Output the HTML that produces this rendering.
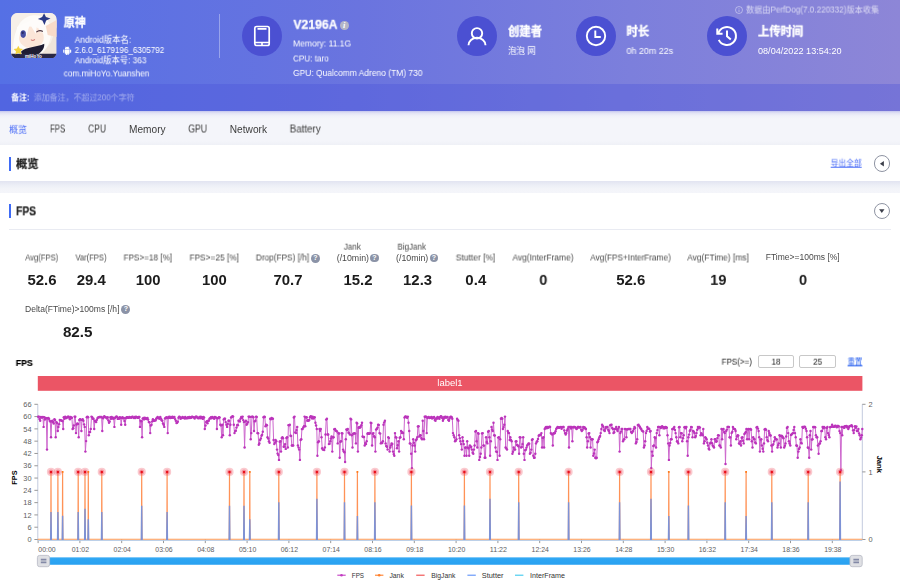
<!DOCTYPE html>
<html lang="zh-CN"><head><meta charset="utf-8"><title>PerfDog</title>
<style>
html,body{margin:0;padding:0;}
body{width:900px;height:581px;overflow:hidden;background:#fff;font-family:"Liberation Sans","Noto Sans CJK SC",sans-serif;position:relative;}
.t{position:absolute;left:0;top:0;white-space:nowrap;display:inline-block;transform-origin:0 50%;will-change:transform;}
.abs{position:absolute;}
.hdr{position:absolute;left:0;top:0;width:900px;height:110.8px;background:linear-gradient(90deg,#5570e5 0%,#6a74df 40%,#7c7fdc 70%,#8d86d7 100%);}
.rem{position:absolute;left:0;top:84px;width:900px;height:27px;background:rgba(72,82,216,.34);}
.circ{position:absolute;width:40px;height:40px;border-radius:50%;background:#4b50d2;top:16px;}
.nav{position:absolute;left:0;top:110.7px;width:900px;height:34.5px;background:linear-gradient(180deg,#c4c6ee 0,#e2e3f4 2px,#f0f1f9 5px,#f4f5fa 8px,#f4f5fa 30px,#eef0f6 34.5px);}
.card1{position:absolute;left:0;top:145.2px;width:900px;height:35.7px;background:#fff;}
.gap{position:absolute;left:0;top:180.9px;width:900px;height:12px;background:linear-gradient(180deg,#e2e4f1 0,#eceef6 4px,#f3f4f9 8px,#f4f5fa 100%);}
.bar{position:absolute;left:9.3px;width:2px;height:14px;background:#3f6bf5;}
.q{position:absolute;width:8.8px;height:8.8px;border-radius:50%;background:#8b93a7;color:#fff;font-size:7px;line-height:8.8px;text-align:center;font-weight:bold;}
.btn{position:absolute;width:16.6px;height:16.6px;border-radius:50%;border:.8px solid #8f94a3;background:#fff;box-sizing:border-box;left:873.9px;}
.inp{position:absolute;top:355px;height:12.6px;width:36.4px;border:1px solid #c8c8c8;border-radius:2px;box-sizing:border-box;background:#fff;}
</style></head><body>
<div class="hdr"></div><div class="rem"></div>
<div class="nav"></div><div class="card1"></div><div class="gap"></div>
<!-- app icon -->
<svg class="abs" style="left:11.4px;top:12.5px" width="45.7" height="45.8" viewBox="0 0 46 46">
<defs><clipPath id="ic"><rect x="0" y="0" width="46" height="46" rx="6.5"/></clipPath></defs>
<g clip-path="url(#ic)">
<rect width="46" height="46" fill="#efe4da"/>
<path d="M0 0H46V14L40 30L30 42H0Z" fill="#f6efe8"/>
<path d="M2 46C1 24 6 5 21 2.500C33 1 41 8 40.500 19C40 29 36 37 29 42Z" fill="#fdfbf8"/>
<ellipse cx="20.500" cy="24.500" rx="12.500" ry="11" fill="#fbe6d8"/>
<path d="M6 14L27 4L25 21L19 11L15 25L10 16L7 30Z" fill="#fefcfa"/>
<path d="M24 6C32 8 37 14 36 24L33 16L30 20Z" fill="#fefcfa"/>
<ellipse cx="12.300" cy="21.200" rx="2.700" ry="3.800" fill="#474fa3"/>
<ellipse cx="11.800" cy="19.800" rx="1.100" ry="1.300" fill="#2a2c66"/>
<path d="M25.500 19.200q3.200-2.600 6.600-.6" stroke="#4a3540" stroke-width="1.100" fill="none"/>
<path d="M20 27q2 1.300 4.200-.3" stroke="#c9615f" stroke-width=".9" fill="none"/>
<path d="M35 13L46 7V24L37 22Z" fill="#f8dbc9"/>
<path d="M33.300 0.200l1.900 3.800 4.600 1.600-4.400 1.800-1.700 4.600-2.100-4.400-4.500-1.700 4.300-1.900z" fill="#2b3a86"/>
<path d="M10 39C15 34 26 34.500 33.500 31C34 36 30 41 24 43H12Z" fill="#1e1c32"/>
<path d="M0 41H46V46H0Z" fill="#2a2846"/>
<path d="M7.300 32.800l1.500 2.900 3.300.5-2.400 2.300.6 3.300-3-1.600-2.900 1.600.6-3.300L2.600 36.200l3.300-.5z" fill="#f3d23f"/>
</g>
<text x="22.600" y="45" font-size="4.600" font-weight="bold" fill="#fff" text-anchor="middle" font-family='"Liberation Sans","Noto Sans CJK SC",sans-serif'>miHoYo</text>
</svg>
<!-- android icon -->
<svg class="abs" style="left:63.3px;top:45.6px" width="8.4" height="9.4" viewBox="0 0 24 27"><g fill="#fff"><path d="M5 10h14v11a1.500 1.500 0 0 1-1.500 1.500H16V26a1.600 1.600 0 0 1-3.200 0v-3.500h-1.600V26a1.600 1.600 0 0 1-3.200 0v-3.500H6.500A1.500 1.500 0 0 1 5 21z"/><rect x="0.500" y="10" width="3.300" height="9.500" rx="1.650"/><rect x="20.200" y="10" width="3.300" height="9.500" rx="1.650"/><path d="M5 9a7 6.500 0 0 1 14 0zM8.300 5.500a.8.800 0 1 0 1.600 0 .8.800 0 1 0-1.600 0zM14.100 5.500a.8.800 0 1 0 1.600 0 .8.800 0 1 0-1.600 0z" fill-rule="evenodd"/><path d="M7.500 1l1.500 2.500M16.500 1L15 3.500" stroke="#fff" stroke-width="1"/></g></svg>
<div class="abs" style="left:219px;top:14px;width:1px;height:44px;background:rgba(255,255,255,.35)"></div>
<div class="circ" style="left:242px"></div><div class="circ" style="left:457px"></div><div class="circ" style="left:575.5px"></div><div class="circ" style="left:707px"></div>
<!-- header icons -->
<svg class="abs" style="left:242px;top:16px" width="40" height="40" viewBox="0 0 40 40" fill="none" stroke="#fff" stroke-width="1.700"><rect x="12.800" y="10.500" width="14.400" height="19" rx="1.800"/><path d="M12.800 26.500h14.400M15.500 12.800h9" /><path d="M20 26.500v3"/></svg>
<svg class="abs" style="left:457px;top:16px" width="40" height="40" viewBox="0 0 40 40" fill="none" stroke="#fff" stroke-width="1.900"><circle cx="20" cy="17.300" r="5.200"/><path d="M11.500 29.300a8.500 7.500 0 0 1 17 0"/></svg>
<svg class="abs" style="left:575.5px;top:16px" width="40" height="40" viewBox="0 0 40 40" fill="none" stroke="#fff" stroke-width="1.900"><circle cx="20" cy="20" r="9.200"/><path d="M19.300 14.500v6.500h5.500"/></svg>
<svg class="abs" style="left:707px;top:16px" width="40" height="40" viewBox="0 0 40 40" fill="none" stroke="#fff" stroke-width="2"><path d="M11.300 17.500A9 9 0 1 1 11.800 23.800"/><path d="M10.300 12.500v5.300h5.300" /><path d="M20 14.500v5.800l3.800 3.300"/></svg>
<!-- info icons -->
<span class="abs" style="left:339.900px;top:21.300px;width:8.800px;height:8.800px;border-radius:50%;background:#b4b5c6;color:#fff;font-size:8.500px;line-height:8.800px;text-align:center;font-style:italic;font-weight:bold;font-family:'Liberation Serif',serif">i</span>
<svg class="abs" style="left:734.500px;top:6px" width="8" height="8" viewBox="0 0 8 8" fill="none" stroke="rgba(255,255,255,.7)" stroke-width=".6"><circle cx="4" cy="4" r="3.500"/><path d="M4 3.500v2.500M4 2v.7"/></svg>
<!-- section bars & buttons -->
<div class="bar" style="top:156.500px"></div><div class="bar" style="top:204.300px"></div>
<div class="btn" style="top:155.300px"></div><div class="btn" style="top:202.600px"></div>
<svg class="abs" style="left:874.200px;top:155.800px" width="15.600" height="15.600" viewBox="0 0 15.600 15.600"><path d="M9.900 5.100v5.400L5.900 7.800z" fill="#3c3f4a"/></svg>
<svg class="abs" style="left:874.200px;top:203px" width="15.600" height="15.600" viewBox="0 0 15.600 15.600"><path d="M5.100 6.200h5.400L7.800 10z" fill="#3c3f4a"/></svg>
<div class="abs" style="left:9px;top:229px;width:881.500px;height:1px;background:#e9ebf2"></div>
<div class="inp" style="left:757.600px"></div><div class="inp" style="left:799.400px"></div>
<svg class="abs" style="left:0;top:0" width="900" height="581" viewBox="0 0 900 581" font-family='"Liberation Sans","Noto Sans CJK SC",sans-serif'><rect x="37.8" y="376" width="824.6" height="14.8" fill="#eb5565"/><path d="M37.8 404.3V539.5M862.3 404.3V539.5" stroke="#c2cade" stroke-width="1" fill="none"/><path d="M34.4 539.50H37.8M34.4 527.21H37.8M34.4 514.92H37.8M34.4 502.63H37.8M34.4 490.34H37.8M34.4 478.05H37.8M34.4 465.75H37.8M34.4 453.46H37.8M34.4 441.17H37.8M34.4 428.88H37.8M34.4 416.59H37.8M34.4 404.30H37.8M862.3 539.50h3.2M862.3 471.90h3.2M862.3 404.30h3.2M38.10 539.5v3.6M79.90 539.5v3.6M121.70 539.5v3.6M163.50 539.5v3.6M205.30 539.5v3.6M247.10 539.5v3.6M288.90 539.5v3.6M330.70 539.5v3.6M372.50 539.5v3.6M414.30 539.5v3.6M456.10 539.5v3.6M497.90 539.5v3.6M539.70 539.5v3.6M581.50 539.5v3.6M623.30 539.5v3.6M665.10 539.5v3.6M706.90 539.5v3.6M748.70 539.5v3.6M790.50 539.5v3.6M832.30 539.5v3.6" stroke="#8c8c8c" stroke-width="0.9" fill="none"/><g font-size="7.4" fill="#606060"><text x="31.6" y="542.20" text-anchor="end">0</text><text x="31.6" y="529.91" text-anchor="end">6</text><text x="31.6" y="517.62" text-anchor="end">12</text><text x="31.6" y="505.33" text-anchor="end">18</text><text x="31.6" y="493.04" text-anchor="end">24</text><text x="31.6" y="480.75" text-anchor="end">30</text><text x="31.6" y="468.45" text-anchor="end">36</text><text x="31.6" y="456.16" text-anchor="end">42</text><text x="31.6" y="443.87" text-anchor="end">48</text><text x="31.6" y="431.58" text-anchor="end">54</text><text x="31.6" y="419.29" text-anchor="end">60</text><text x="31.6" y="407.00" text-anchor="end">66</text><text x="868.6" y="542.20">0</text><text x="868.6" y="474.60">1</text><text x="868.6" y="407.00">2</text><text x="38.3" y="551.7" textLength="17.3" lengthAdjust="spacingAndGlyphs">00:00</text><text x="71.75" y="551.7" textLength="17.3" lengthAdjust="spacingAndGlyphs">01:02</text><text x="113.55" y="551.7" textLength="17.3" lengthAdjust="spacingAndGlyphs">02:04</text><text x="155.35" y="551.7" textLength="17.3" lengthAdjust="spacingAndGlyphs">03:06</text><text x="197.15" y="551.7" textLength="17.3" lengthAdjust="spacingAndGlyphs">04:08</text><text x="238.95" y="551.7" textLength="17.3" lengthAdjust="spacingAndGlyphs">05:10</text><text x="280.75" y="551.7" textLength="17.3" lengthAdjust="spacingAndGlyphs">06:12</text><text x="322.55" y="551.7" textLength="17.3" lengthAdjust="spacingAndGlyphs">07:14</text><text x="364.35" y="551.7" textLength="17.3" lengthAdjust="spacingAndGlyphs">08:16</text><text x="406.15" y="551.7" textLength="17.3" lengthAdjust="spacingAndGlyphs">09:18</text><text x="447.95" y="551.7" textLength="17.3" lengthAdjust="spacingAndGlyphs">10:20</text><text x="489.75" y="551.7" textLength="17.3" lengthAdjust="spacingAndGlyphs">11:22</text><text x="531.55" y="551.7" textLength="17.3" lengthAdjust="spacingAndGlyphs">12:24</text><text x="573.35" y="551.7" textLength="17.3" lengthAdjust="spacingAndGlyphs">13:26</text><text x="615.15" y="551.7" textLength="17.3" lengthAdjust="spacingAndGlyphs">14:28</text><text x="656.95" y="551.7" textLength="17.3" lengthAdjust="spacingAndGlyphs">15:30</text><text x="698.75" y="551.7" textLength="17.3" lengthAdjust="spacingAndGlyphs">16:32</text><text x="740.55" y="551.7" textLength="17.3" lengthAdjust="spacingAndGlyphs">17:34</text><text x="782.35" y="551.7" textLength="17.3" lengthAdjust="spacingAndGlyphs">18:36</text><text x="824.15" y="551.7" textLength="17.3" lengthAdjust="spacingAndGlyphs">19:38</text></g><text transform="translate(17.3 477.6) rotate(-90)" font-size="7.3" font-weight="bold" fill="#000" text-anchor="middle">FPS</text><text transform="translate(877.3 464.3) rotate(90)" font-size="7.6" font-weight="bold" fill="#000" text-anchor="middle">Jank</text><path d="M38.2 416.8L38.9 416.6L39.5 418.9L40.2 420.7L40.9 416.9L41.6 417.5L42.2 417.5L42.9 416.9L43.6 426.9L44.3 417.3L44.9 419.5L45.6 418.0L46.3 418.2L47.0 449.6L47.6 418.2L48.3 418.0L49.0 418.8L49.7 420.7L50.3 421.6L51.0 437.2L51.7 421.2L52.4 420.7L53.0 422.0L53.7 423.5L54.4 419.3L55.1 420.0L55.7 437.2L56.4 422.1L57.1 423.0L57.8 431.0L58.4 426.9L59.1 424.2L59.8 420.0L60.5 420.1L61.1 420.4L61.8 420.7L62.5 421.0L63.2 429.0L63.8 417.3L64.5 418.8L65.2 416.6L65.9 418.1L66.5 418.0L67.2 417.2L67.9 416.8L68.6 416.6L69.2 417.8L69.9 419.3L70.6 416.9L71.3 417.8L71.9 417.8L72.6 429.0L73.3 428.2L73.9 425.5L74.6 416.6L75.3 416.8L76.0 433.1L76.6 424.5L77.3 423.5L78.0 423.9L78.7 437.2L79.3 420.0L80.0 419.3L80.7 419.6L81.4 431.0L82.0 419.9L82.7 419.3L83.4 420.7L84.1 424.4L84.7 426.9L85.4 451.6L86.1 441.1L86.8 417.2L87.4 416.6L88.1 417.2L88.8 435.2L89.5 431.9L90.1 432.1L90.8 429.0L91.5 416.6L92.2 417.3L92.8 418.7L93.5 418.8L94.2 429.0L94.9 420.7L95.5 421.7L96.2 422.1L96.9 419.8L97.6 418.0L98.2 417.4L98.9 417.3L99.6 417.0L100.3 416.9L100.9 417.2L101.6 416.9L102.3 431.0L103.0 418.2L103.6 417.3L104.3 416.2L105.0 416.9L105.7 417.1L106.3 417.7L107.0 418.5L107.7 417.3L108.3 420.4L109.0 422.8L109.7 421.6L110.4 417.3L111.0 418.7L111.7 416.9L112.4 418.5L113.1 417.7L113.7 418.7L114.4 426.9L115.1 417.8L115.8 417.3L116.4 416.4L117.1 416.9L117.8 418.9L118.5 418.0L119.1 418.8L119.8 417.3L120.5 417.7L121.2 424.8L121.8 417.9L122.5 417.3L123.2 418.4L123.9 418.0L124.5 421.0L125.2 424.8L125.9 418.3L126.6 417.3L127.2 417.1L127.9 417.7L128.6 417.9L129.3 416.9L129.9 417.5L130.6 417.4L131.3 417.7L132.0 416.9L132.6 416.8L133.3 417.6L134.0 418.1L134.7 416.9L135.3 418.0L136.0 416.7L136.7 417.4L137.4 417.1L138.0 417.9L138.7 416.9L139.4 416.9L140.0 426.9L140.7 420.7L141.4 421.3L142.1 437.2L142.7 418.6L143.4 418.0L144.1 419.4L144.8 417.7L145.4 418.7L146.1 418.2L146.8 419.1L147.5 418.0L148.1 419.6L148.8 422.1L149.5 422.2L150.2 433.1L150.8 425.5L151.5 424.8L152.2 421.4L152.9 419.3L153.5 420.7L154.2 420.7L154.9 420.4L155.6 420.4L156.2 418.7L156.9 417.9L157.6 416.9L158.3 418.3L158.9 417.7L159.6 418.8L160.3 416.9L161.0 418.6L161.6 420.2L162.3 420.7L163.0 423.5L163.7 424.8L164.3 426.9L165.0 418.4L165.7 418.0L166.4 417.3L167.0 418.0L167.7 433.1L168.4 416.9L169.1 417.9L169.7 416.6L170.4 418.1L171.1 417.1L171.8 417.9L172.4 416.6L173.1 417.8L173.8 417.3L174.4 416.9L175.1 419.1L175.8 420.7L176.5 423.1L177.1 422.8L177.8 421.7L178.5 417.7L179.2 416.8L179.8 416.9L180.5 418.7L181.2 418.0L181.9 418.0L182.5 416.9L183.2 417.7L183.9 417.7L184.6 418.5L185.2 416.9L185.9 418.2L186.6 418.0L187.3 418.2L187.9 417.1L188.6 418.1L189.3 416.9L190.0 418.0L190.6 417.3L191.3 417.7L192.0 416.7L192.7 416.9L193.3 417.2L194.0 417.4L194.7 418.5L195.4 416.9L196.0 416.7L196.7 416.6L197.4 417.7L198.1 418.2L198.7 418.1L199.4 416.9L200.1 418.2L200.8 416.6L201.4 418.1L202.1 417.1L202.8 418.9L203.5 416.9L204.1 417.6L204.8 429.0L205.5 425.6L206.2 422.1L206.8 421.2L207.5 423.2L208.2 420.7L208.8 420.7L209.5 418.7L210.2 418.2L210.9 417.3L211.5 418.2L212.2 416.9L212.9 417.5L213.6 418.0L214.2 418.8L214.9 416.9L215.6 417.4L216.3 417.7L216.9 429.0L217.6 418.3L218.3 418.0L219.0 417.3L219.6 417.5L220.3 424.8L221.0 425.4L221.7 437.2L222.3 424.8L223.0 435.2L223.7 419.5L224.4 418.8L225.0 418.7L225.7 422.1L226.4 424.8L227.1 426.9L227.7 424.0L228.4 420.7L229.1 420.7L229.8 435.2L230.4 424.8L231.1 417.5L231.8 416.9L232.5 416.2L233.1 416.6L233.8 424.8L234.5 433.1L235.2 431.1L235.8 430.7L236.5 427.6L237.2 425.0L237.9 425.2L238.5 420.7L239.2 420.6L239.9 421.6L240.5 418.7L241.2 417.0L241.9 417.9L242.6 416.6L243.2 420.1L243.9 422.1L244.6 447.5L245.3 421.4L245.9 420.7L246.6 424.8L247.3 423.7L248.0 422.1L248.6 416.6L249.3 416.8L250.0 416.9L250.7 439.3L251.3 433.1L252.0 416.7L252.7 416.6L253.4 417.2L254.0 431.0L254.7 421.4L255.4 420.7L256.1 416.6L256.7 417.0L257.4 433.1L258.1 433.2L258.8 444.8L259.4 443.4L260.1 440.0L260.8 438.5L261.5 435.8L262.1 434.8L262.8 431.7L263.5 417.2L264.2 416.6L264.8 417.0L265.5 426.2L266.2 424.8L266.9 425.2L267.5 437.2L268.2 438.6L268.9 441.4L269.6 442.7L270.2 418.7L270.9 419.2L271.6 418.0L272.3 418.6L272.9 418.7L273.6 440.0L274.3 444.1L274.9 442.7L275.6 440.0L276.3 441.3L277.0 449.6L277.6 453.6L278.3 455.1L279.0 459.9L279.7 441.8L280.3 441.3L281.0 451.6L281.7 438.1L282.4 437.2L283.0 438.2L283.7 446.8L284.4 446.6L285.1 444.1L285.7 448.9L286.4 438.0L287.1 437.2L287.8 447.5L288.4 425.1L289.1 425.3L289.8 424.8L290.5 435.8L291.1 436.0L291.8 445.5L292.5 445.5L293.2 445.5L293.8 417.5L294.5 416.6L295.2 432.4L295.9 433.1L296.5 430.1L297.2 426.9L297.9 445.5L298.6 447.6L299.2 449.6L299.9 459.9L300.6 440.0L301.3 439.3L301.9 429.1L302.6 429.0L303.3 427.4L304.0 426.2L304.6 416.6L305.3 426.2L306.0 417.4L306.7 417.3L307.3 420.7L308.0 420.2L308.7 420.7L309.3 419.9L310.0 417.3L310.7 416.3L311.4 416.6L312.0 418.4L312.7 416.6L313.4 418.6L314.1 417.4L314.7 417.3L315.4 422.8L316.1 425.5L316.8 429.0L317.4 455.8L318.1 442.2L318.8 441.3L319.5 429.0L320.1 430.7L320.8 429.0L321.5 437.2L322.2 448.2L322.8 449.6L323.5 449.6L324.2 450.1L324.9 447.5L325.5 434.5L326.2 419.6L326.9 418.7L327.6 434.5L328.2 434.5L328.9 444.1L329.6 443.7L330.3 441.3L330.9 438.5L331.6 436.5L332.3 451.6L333.0 437.4L333.6 437.2L334.3 429.2L335.0 429.0L335.7 430.5L336.3 431.0L337.0 431.4L337.7 443.4L338.4 433.1L339.0 433.5L339.7 457.8L340.4 441.7L341.1 441.3L341.7 433.1L342.4 433.4L343.1 449.6L343.7 451.2L344.4 452.3L345.1 462.0L345.8 439.3L346.4 429.5L347.1 430.0L347.8 429.0L348.5 432.7L349.1 433.1L349.8 434.5L350.5 418.7L351.2 419.4L351.8 435.2L352.5 447.5L353.2 433.8L353.9 433.6L354.5 433.1L355.2 433.6L355.9 443.4L356.6 422.8L357.2 423.4L357.9 451.6L358.6 427.8L359.3 426.9L359.9 427.7L360.6 426.9L361.3 425.3L362.0 422.8L362.6 436.5L363.3 437.1L364.0 437.0L364.7 445.5L365.3 443.1L366.0 444.1L366.7 441.3L367.4 433.7L368.0 433.1L368.7 433.7L369.4 433.7L370.1 433.1L370.7 422.8L371.4 423.1L372.1 445.5L372.8 433.8L373.4 433.1L374.1 436.2L374.8 437.2L375.4 451.6L376.1 429.6L376.8 429.0L377.5 427.6L378.1 424.8L378.8 424.9L379.5 433.1L380.2 433.6L380.8 443.4L381.5 442.8L382.2 443.0L382.9 441.3L383.5 424.8L384.2 422.4L384.9 420.7L385.6 443.4L386.2 446.0L386.9 446.8L387.6 449.6L388.3 437.2L388.9 438.1L389.6 451.6L390.3 447.5L391.0 445.4L391.6 443.4L392.3 443.9L393.0 451.6L393.7 454.1L394.3 455.8L395.0 433.1L395.7 437.2L396.4 437.6L397.0 448.2L397.7 445.3L398.4 441.3L399.1 451.6L399.7 437.7L400.4 437.2L401.1 431.0L401.8 432.9L402.4 432.3L403.1 433.1L403.8 439.3L404.5 417.6L405.1 416.6L405.8 416.5L406.5 417.3L407.2 417.8L407.8 416.6L408.5 422.8L409.2 431.0L409.8 443.4L410.5 443.6L411.2 453.7L411.9 468.1L412.5 445.5L413.2 439.3L413.9 442.8L414.6 445.5L415.2 451.6L415.9 440.2L416.6 439.3L417.3 437.2L417.9 426.5L418.6 426.2L419.3 436.5L420.0 435.4L420.6 435.2L421.3 438.1L422.0 439.3L422.7 420.7L423.3 431.0L424.0 439.3L424.7 416.7L425.4 416.6L426.0 416.7L426.7 433.1L427.4 418.1L428.1 417.3L428.7 416.9L429.4 418.1L430.1 417.7L430.8 417.8L431.4 416.9L432.1 418.5L432.8 417.4L433.5 417.8L434.1 416.9L434.8 420.0L435.5 420.7L436.2 418.3L436.8 418.8L437.5 416.9L438.2 418.3L438.9 417.4L439.5 418.8L440.2 416.9L440.9 416.2L441.6 416.6L442.2 418.1L442.9 420.7L443.6 419.0L444.2 416.9L444.9 417.8L445.6 416.6L446.3 417.5L446.9 417.4L447.6 416.9L448.3 420.0L449.0 420.7L449.6 418.5L450.3 416.9L451.0 416.6L451.7 417.3L452.3 418.7L453.0 433.1L453.7 435.2L454.4 437.2L455.0 441.3L455.7 440.7L456.4 439.3L457.1 418.7L457.7 419.9L458.4 420.7L459.1 435.2L459.8 438.3L460.4 441.3L461.1 444.1L461.8 449.6L462.5 437.2L463.1 441.0L463.8 444.1L464.5 455.8L465.2 447.7L465.8 447.5L466.5 455.8L467.2 441.3L467.9 447.5L468.5 448.4L469.2 455.8L469.9 445.5L470.6 447.3L471.2 446.8L471.9 449.6L472.6 452.7L473.3 453.7L473.9 449.6L474.6 445.5L475.3 431.6L476.0 431.0L476.6 441.3L477.3 447.5L478.0 433.1L478.6 433.7L479.3 459.9L480.0 457.0L480.7 453.7L481.3 447.5L482.0 433.4L482.7 433.1L483.4 445.5L484.0 445.6L484.7 457.8L485.4 457.8L486.1 437.2L486.7 441.9L487.4 443.4L488.1 431.8L488.8 431.0L489.4 437.2L490.1 455.8L490.8 441.3L491.5 426.9L492.1 429.6L492.8 431.0L493.5 422.8L494.2 435.2L494.8 435.5L495.5 447.5L496.2 451.6L496.9 451.9L497.5 459.9L498.2 437.6L498.9 437.2L499.6 455.8L500.2 439.3L500.9 418.7L501.6 417.9L502.3 418.7L502.9 429.0L503.6 427.1L504.3 424.8L505.0 416.6L505.6 447.5L506.3 448.4L507.0 449.6L507.7 431.0L508.3 432.8L509.0 433.1L509.7 440.0L510.3 437.2L511.0 440.0L511.7 441.3L512.4 453.7L513.0 451.8L513.7 447.5L514.4 449.6L515.1 449.6L515.7 441.4L516.4 441.3L517.1 445.0L517.8 445.5L518.4 446.2L519.1 453.7L519.8 437.2L520.5 437.4L521.1 447.5L521.8 446.9L522.5 444.1L523.2 437.2L523.8 453.7L524.5 459.9L525.2 450.3L525.9 449.6L526.5 447.6L527.2 445.5L527.9 444.4L528.6 443.4L529.2 443.8L529.9 453.7L530.6 452.8L531.3 449.6L531.9 439.9L532.6 439.3L533.3 455.8L534.0 457.7L534.6 457.8L535.3 453.7L536.0 443.4L536.7 441.8L537.3 441.3L538.0 438.9L538.7 435.8L539.4 435.0L540.0 435.2L540.7 434.6L541.4 433.1L542.1 447.5L542.7 437.9L543.4 437.2L544.1 447.5L544.7 429.0L545.4 427.7L546.1 426.9L546.8 428.2L547.4 426.9L548.1 427.8L548.8 427.3L549.5 426.6L550.1 426.9L550.8 433.1L551.5 433.9L552.2 434.5L552.8 445.5L553.5 433.1L554.2 433.6L554.9 433.1L555.5 431.3L556.2 429.0L556.9 427.9L557.6 426.9L558.2 427.8L558.9 427.3L559.6 427.8L560.3 427.1L560.9 426.9L561.6 428.7L562.3 427.3L563.0 426.9L563.6 426.9L564.3 430.5L565.0 433.1L565.7 434.5L566.3 433.1L567.0 430.5L567.7 429.0L568.4 426.9L569.0 447.5L569.7 426.9L570.4 426.9L571.1 428.5L571.7 426.9L572.4 441.3L573.1 427.5L573.8 426.9L574.4 427.0L575.1 427.3L575.8 428.0L576.5 429.0L577.1 428.3L577.8 426.9L578.5 427.0L579.1 427.6L579.8 427.2L580.5 426.9L581.2 429.8L581.8 431.0L582.5 430.0L583.2 426.9L583.9 428.3L584.5 427.3L585.2 428.3L585.9 429.0L586.6 437.2L587.2 447.5L587.9 441.3L588.6 433.5L589.3 433.1L589.9 437.2L590.6 447.5L591.3 439.3L592.0 439.3L592.6 439.3L593.3 455.8L594.0 453.5L594.7 449.6L595.3 457.8L596.0 458.2L596.7 457.8L597.4 442.3L598.0 441.3L598.7 439.2L599.4 437.2L600.1 436.0L600.7 433.1L601.4 429.0L602.1 424.8L602.8 425.9L603.4 426.9L604.1 430.2L604.8 431.0L605.5 428.5L606.1 426.9L606.8 427.2L607.5 426.9L608.2 429.7L608.8 431.0L609.5 433.1L610.2 425.3L610.9 425.0L611.5 424.8L612.2 428.0L612.9 429.0L613.5 433.1L614.2 432.2L614.9 429.0L615.6 428.9L616.2 426.9L616.9 429.5L617.6 431.0L618.3 428.6L618.9 426.9L619.6 451.6L620.3 433.1L621.0 431.6L621.6 429.0L622.3 429.0L623.0 441.3L623.7 439.6L624.3 439.3L625.0 429.0L625.7 429.1L626.4 437.2L627.0 429.5L627.7 429.1L628.4 429.0L629.1 429.1L629.7 429.0L630.4 429.0L631.1 431.9L631.8 433.1L632.4 431.9L633.1 431.0L633.8 428.9L634.5 426.9L635.1 427.9L635.8 443.4L636.5 442.0L637.2 439.3L637.8 425.1L638.5 424.8L639.2 425.9L639.9 426.9L640.5 428.3L641.2 429.0L641.9 430.6L642.6 431.0L643.2 431.6L643.9 447.5L644.6 445.5L645.2 441.3L645.9 433.1L646.6 431.0L647.3 426.9L647.9 428.9L648.6 428.5L649.3 429.0L650.0 431.6L650.6 431.0L651.3 468.1L652.0 451.6L652.7 455.8L653.3 446.0L654.0 445.5L654.7 437.2L655.4 438.0L656.0 447.5L656.7 433.1L657.4 430.1L658.1 426.9L658.7 426.9L659.4 435.2L660.1 426.9L660.8 428.1L661.4 427.3L662.1 426.3L662.8 426.9L663.5 428.4L664.1 427.3L664.8 428.3L665.5 426.9L666.2 427.3L666.8 427.7L667.5 435.2L668.2 443.4L668.9 459.9L669.5 445.5L670.2 443.0L670.9 439.3L671.6 439.3L672.2 429.1L672.9 429.0L673.6 428.2L674.3 426.9L674.9 429.9L675.6 433.1L676.3 437.2L677.0 441.3L677.6 441.9L678.3 443.4L679.0 427.3L679.6 426.9L680.3 437.2L681.0 433.1L681.7 433.3L682.3 441.3L683.0 438.2L683.7 435.2L684.4 427.2L685.0 426.9L685.7 428.3L686.4 426.9L687.1 441.3L687.7 455.8L688.4 437.2L689.1 434.6L689.8 431.0L690.4 429.7L691.1 426.9L691.8 427.1L692.5 437.2L693.1 431.0L693.8 431.6L694.5 433.1L695.2 437.2L695.8 436.0L696.5 433.1L697.2 429.7L697.9 426.9L698.5 428.3L699.2 426.9L699.9 427.6L700.6 435.2L701.2 433.1L701.9 434.2L702.6 435.2L703.3 429.0L703.9 443.4L704.6 441.3L705.3 437.2L706.0 438.1L706.6 439.3L707.3 442.7L708.0 445.5L708.7 448.7L709.3 449.6L710.0 443.4L710.7 442.7L711.4 439.3L712.0 443.3L712.7 445.5L713.4 446.4L714.0 447.5L714.7 439.3L715.4 439.3L716.1 441.7L716.7 441.3L717.4 438.1L718.1 435.2L718.8 435.4L719.4 445.5L720.1 445.8L720.8 447.5L721.5 429.0L722.1 439.3L722.8 429.5L723.5 429.0L724.2 432.0L724.8 433.1L725.5 464.0L726.2 431.0L726.9 429.6L727.5 426.9L728.2 427.0L728.9 426.9L729.6 437.2L730.2 437.4L730.9 445.5L731.6 433.1L732.3 431.7L732.9 426.9L733.6 428.8L734.3 429.0L735.0 429.2L735.6 431.0L736.3 439.3L737.0 436.5L737.7 435.2L738.3 435.6L739.0 443.4L739.7 443.8L740.4 441.3L741.0 445.5L741.7 437.8L742.4 437.2L743.1 440.8L743.7 443.4L744.4 434.0L745.1 433.1L745.8 432.0L746.4 429.0L747.1 439.3L747.8 429.4L748.4 429.0L749.1 439.3L749.8 429.1L750.5 429.0L751.1 429.8L751.8 441.3L752.5 447.5L753.2 437.2L753.8 438.9L754.5 439.3L755.2 442.5L755.9 443.4L756.5 427.4L757.2 426.9L757.9 428.6L758.6 431.0L759.2 437.2L759.9 451.6L760.6 439.6L761.3 439.3L761.9 445.5L762.6 448.7L763.3 451.6L764.0 443.4L764.6 429.5L765.3 429.0L766.0 429.7L766.7 437.2L767.3 440.1L768.0 441.3L768.7 431.0L769.4 433.1L770.0 435.2L770.7 435.5L771.4 445.5L772.1 451.6L772.7 445.1L773.4 444.1L774.1 441.4L774.8 437.2L775.4 439.3L776.1 439.3L776.8 439.4L777.5 447.5L778.1 445.3L778.8 443.4L779.5 435.2L780.1 436.0L780.8 447.5L781.5 435.8L782.2 436.2L782.8 437.2L783.5 438.2L784.2 447.5L784.9 445.8L785.5 443.4L786.2 436.5L786.9 427.9L787.6 426.9L788.2 433.1L788.9 441.3L789.6 443.5L790.3 445.5L790.9 435.0L791.6 434.5L792.3 433.6L793.0 433.1L793.6 429.9L794.3 426.9L795.0 433.1L795.7 437.2L796.3 445.5L797.0 445.8L797.7 457.8L798.4 451.6L799.0 448.9L799.7 447.5L800.4 439.3L801.1 442.9L801.7 443.4L802.4 426.9L803.1 427.9L803.8 426.9L804.4 426.7L805.1 426.9L805.8 428.7L806.5 431.0L807.1 437.2L807.8 447.5L808.5 448.0L809.2 457.8L809.8 435.2L810.5 431.0L811.2 449.6L811.9 439.6L812.5 439.3L813.2 426.9L813.9 427.2L814.5 426.9L815.2 427.2L815.9 435.2L816.6 437.3L817.2 437.2L817.9 445.5L818.6 453.7L819.3 443.8L819.9 443.4L820.6 441.3L821.3 431.1L822.0 431.0L822.6 426.9L823.3 428.4L824.0 426.9L824.7 427.6L825.3 437.2L826.0 439.3L826.7 427.9L827.4 426.9L828.0 433.1L828.7 435.1L829.4 437.2L830.1 427.3L830.7 426.9L831.4 426.9L832.1 424.8L832.8 426.5L833.4 426.9L834.1 426.7L834.8 425.9L835.5 425.8L836.1 426.5L836.8 427.2L837.5 425.9L838.2 425.9L838.8 426.5L839.5 431.1L840.2 433.1L840.9 470.2L841.5 426.9L842.2 435.2L842.9 426.9L843.6 426.9L844.2 427.9L844.9 426.2L845.6 426.2L846.3 425.9L846.9 427.3L847.6 426.5L848.3 429.0L848.9 427.5L849.6 426.2L850.3 425.9L851.0 425.9L851.6 425.3L852.3 426.5L853.0 430.4L853.7 433.1L854.3 430.1L855.0 426.2L855.7 427.8L856.4 426.5L857.0 431.0L857.7 431.1L858.4 429.0L859.1 433.4L859.7 435.2L860.4 439.3L861.1 437.6L861.8 435.2L862.3 429.0" stroke="#cd66cd" stroke-width="1" fill="none" stroke-linejoin="round"/><g fill="#bb34bb"><circle cx="38.2" cy="416.8" r="1.22"/><circle cx="38.9" cy="416.6" r="1.22"/><circle cx="39.5" cy="418.9" r="1.22"/><circle cx="40.2" cy="420.7" r="1.22"/><circle cx="40.9" cy="416.9" r="1.22"/><circle cx="41.6" cy="417.5" r="1.22"/><circle cx="42.2" cy="417.5" r="1.22"/><circle cx="42.9" cy="416.9" r="1.22"/><circle cx="43.6" cy="426.9" r="1.22"/><circle cx="44.3" cy="417.3" r="1.22"/><circle cx="44.9" cy="419.5" r="1.22"/><circle cx="45.6" cy="418.0" r="1.22"/><circle cx="46.3" cy="418.2" r="1.22"/><circle cx="47.0" cy="449.6" r="1.22"/><circle cx="47.6" cy="418.2" r="1.22"/><circle cx="48.3" cy="418.0" r="1.22"/><circle cx="49.0" cy="418.8" r="1.22"/><circle cx="49.7" cy="420.7" r="1.22"/><circle cx="50.3" cy="421.6" r="1.22"/><circle cx="51.0" cy="437.2" r="1.22"/><circle cx="51.7" cy="421.2" r="1.22"/><circle cx="52.4" cy="420.7" r="1.22"/><circle cx="53.0" cy="422.0" r="1.22"/><circle cx="53.7" cy="423.5" r="1.22"/><circle cx="54.4" cy="419.3" r="1.22"/><circle cx="55.1" cy="420.0" r="1.22"/><circle cx="55.7" cy="437.2" r="1.22"/><circle cx="56.4" cy="422.1" r="1.22"/><circle cx="57.1" cy="423.0" r="1.22"/><circle cx="57.8" cy="431.0" r="1.22"/><circle cx="58.4" cy="426.9" r="1.22"/><circle cx="59.1" cy="424.2" r="1.22"/><circle cx="59.8" cy="420.0" r="1.22"/><circle cx="60.5" cy="420.1" r="1.22"/><circle cx="61.1" cy="420.4" r="1.22"/><circle cx="61.8" cy="420.7" r="1.22"/><circle cx="62.5" cy="421.0" r="1.22"/><circle cx="63.2" cy="429.0" r="1.22"/><circle cx="63.8" cy="417.3" r="1.22"/><circle cx="64.5" cy="418.8" r="1.22"/><circle cx="65.2" cy="416.6" r="1.22"/><circle cx="65.9" cy="418.1" r="1.22"/><circle cx="66.5" cy="418.0" r="1.22"/><circle cx="67.2" cy="417.2" r="1.22"/><circle cx="67.9" cy="416.8" r="1.22"/><circle cx="68.6" cy="416.6" r="1.22"/><circle cx="69.2" cy="417.8" r="1.22"/><circle cx="69.9" cy="419.3" r="1.22"/><circle cx="70.6" cy="416.9" r="1.22"/><circle cx="71.3" cy="417.8" r="1.22"/><circle cx="71.9" cy="417.8" r="1.22"/><circle cx="72.6" cy="429.0" r="1.22"/><circle cx="73.3" cy="428.2" r="1.22"/><circle cx="73.9" cy="425.5" r="1.22"/><circle cx="74.6" cy="416.6" r="1.22"/><circle cx="75.3" cy="416.8" r="1.22"/><circle cx="76.0" cy="433.1" r="1.22"/><circle cx="76.6" cy="424.5" r="1.22"/><circle cx="77.3" cy="423.5" r="1.22"/><circle cx="78.0" cy="423.9" r="1.22"/><circle cx="78.7" cy="437.2" r="1.22"/><circle cx="79.3" cy="420.0" r="1.22"/><circle cx="80.0" cy="419.3" r="1.22"/><circle cx="80.7" cy="419.6" r="1.22"/><circle cx="81.4" cy="431.0" r="1.22"/><circle cx="82.0" cy="419.9" r="1.22"/><circle cx="82.7" cy="419.3" r="1.22"/><circle cx="83.4" cy="420.7" r="1.22"/><circle cx="84.1" cy="424.4" r="1.22"/><circle cx="84.7" cy="426.9" r="1.22"/><circle cx="85.4" cy="451.6" r="1.22"/><circle cx="86.1" cy="441.1" r="1.22"/><circle cx="86.8" cy="417.2" r="1.22"/><circle cx="87.4" cy="416.6" r="1.22"/><circle cx="88.1" cy="417.2" r="1.22"/><circle cx="88.8" cy="435.2" r="1.22"/><circle cx="89.5" cy="431.9" r="1.22"/><circle cx="90.1" cy="432.1" r="1.22"/><circle cx="90.8" cy="429.0" r="1.22"/><circle cx="91.5" cy="416.6" r="1.22"/><circle cx="92.2" cy="417.3" r="1.22"/><circle cx="92.8" cy="418.7" r="1.22"/><circle cx="93.5" cy="418.8" r="1.22"/><circle cx="94.2" cy="429.0" r="1.22"/><circle cx="94.9" cy="420.7" r="1.22"/><circle cx="95.5" cy="421.7" r="1.22"/><circle cx="96.2" cy="422.1" r="1.22"/><circle cx="96.9" cy="419.8" r="1.22"/><circle cx="97.6" cy="418.0" r="1.22"/><circle cx="98.2" cy="417.4" r="1.22"/><circle cx="98.9" cy="417.3" r="1.22"/><circle cx="99.6" cy="417.0" r="1.22"/><circle cx="100.3" cy="416.9" r="1.22"/><circle cx="100.9" cy="417.2" r="1.22"/><circle cx="101.6" cy="416.9" r="1.22"/><circle cx="102.3" cy="431.0" r="1.22"/><circle cx="103.0" cy="418.2" r="1.22"/><circle cx="103.6" cy="417.3" r="1.22"/><circle cx="104.3" cy="416.2" r="1.22"/><circle cx="105.0" cy="416.9" r="1.22"/><circle cx="105.7" cy="417.1" r="1.22"/><circle cx="106.3" cy="417.7" r="1.22"/><circle cx="107.0" cy="418.5" r="1.22"/><circle cx="107.7" cy="417.3" r="1.22"/><circle cx="108.3" cy="420.4" r="1.22"/><circle cx="109.0" cy="422.8" r="1.22"/><circle cx="109.7" cy="421.6" r="1.22"/><circle cx="110.4" cy="417.3" r="1.22"/><circle cx="111.0" cy="418.7" r="1.22"/><circle cx="111.7" cy="416.9" r="1.22"/><circle cx="112.4" cy="418.5" r="1.22"/><circle cx="113.1" cy="417.7" r="1.22"/><circle cx="113.7" cy="418.7" r="1.22"/><circle cx="114.4" cy="426.9" r="1.22"/><circle cx="115.1" cy="417.8" r="1.22"/><circle cx="115.8" cy="417.3" r="1.22"/><circle cx="116.4" cy="416.4" r="1.22"/><circle cx="117.1" cy="416.9" r="1.22"/><circle cx="117.8" cy="418.9" r="1.22"/><circle cx="118.5" cy="418.0" r="1.22"/><circle cx="119.1" cy="418.8" r="1.22"/><circle cx="119.8" cy="417.3" r="1.22"/><circle cx="120.5" cy="417.7" r="1.22"/><circle cx="121.2" cy="424.8" r="1.22"/><circle cx="121.8" cy="417.9" r="1.22"/><circle cx="122.5" cy="417.3" r="1.22"/><circle cx="123.2" cy="418.4" r="1.22"/><circle cx="123.9" cy="418.0" r="1.22"/><circle cx="124.5" cy="421.0" r="1.22"/><circle cx="125.2" cy="424.8" r="1.22"/><circle cx="125.9" cy="418.3" r="1.22"/><circle cx="126.6" cy="417.3" r="1.22"/><circle cx="127.2" cy="417.1" r="1.22"/><circle cx="127.9" cy="417.7" r="1.22"/><circle cx="128.6" cy="417.9" r="1.22"/><circle cx="129.3" cy="416.9" r="1.22"/><circle cx="129.9" cy="417.5" r="1.22"/><circle cx="130.6" cy="417.4" r="1.22"/><circle cx="131.3" cy="417.7" r="1.22"/><circle cx="132.0" cy="416.9" r="1.22"/><circle cx="132.6" cy="416.8" r="1.22"/><circle cx="133.3" cy="417.6" r="1.22"/><circle cx="134.0" cy="418.1" r="1.22"/><circle cx="134.7" cy="416.9" r="1.22"/><circle cx="135.3" cy="418.0" r="1.22"/><circle cx="136.0" cy="416.7" r="1.22"/><circle cx="136.7" cy="417.4" r="1.22"/><circle cx="137.4" cy="417.1" r="1.22"/><circle cx="138.0" cy="417.9" r="1.22"/><circle cx="138.7" cy="416.9" r="1.22"/><circle cx="139.4" cy="416.9" r="1.22"/><circle cx="140.0" cy="426.9" r="1.22"/><circle cx="140.7" cy="420.7" r="1.22"/><circle cx="141.4" cy="421.3" r="1.22"/><circle cx="142.1" cy="437.2" r="1.22"/><circle cx="142.7" cy="418.6" r="1.22"/><circle cx="143.4" cy="418.0" r="1.22"/><circle cx="144.1" cy="419.4" r="1.22"/><circle cx="144.8" cy="417.7" r="1.22"/><circle cx="145.4" cy="418.7" r="1.22"/><circle cx="146.1" cy="418.2" r="1.22"/><circle cx="146.8" cy="419.1" r="1.22"/><circle cx="147.5" cy="418.0" r="1.22"/><circle cx="148.1" cy="419.6" r="1.22"/><circle cx="148.8" cy="422.1" r="1.22"/><circle cx="149.5" cy="422.2" r="1.22"/><circle cx="150.2" cy="433.1" r="1.22"/><circle cx="150.8" cy="425.5" r="1.22"/><circle cx="151.5" cy="424.8" r="1.22"/><circle cx="152.2" cy="421.4" r="1.22"/><circle cx="152.9" cy="419.3" r="1.22"/><circle cx="153.5" cy="420.7" r="1.22"/><circle cx="154.2" cy="420.7" r="1.22"/><circle cx="154.9" cy="420.4" r="1.22"/><circle cx="155.6" cy="420.4" r="1.22"/><circle cx="156.2" cy="418.7" r="1.22"/><circle cx="156.9" cy="417.9" r="1.22"/><circle cx="157.6" cy="416.9" r="1.22"/><circle cx="158.3" cy="418.3" r="1.22"/><circle cx="158.9" cy="417.7" r="1.22"/><circle cx="159.6" cy="418.8" r="1.22"/><circle cx="160.3" cy="416.9" r="1.22"/><circle cx="161.0" cy="418.6" r="1.22"/><circle cx="161.6" cy="420.2" r="1.22"/><circle cx="162.3" cy="420.7" r="1.22"/><circle cx="163.0" cy="423.5" r="1.22"/><circle cx="163.7" cy="424.8" r="1.22"/><circle cx="164.3" cy="426.9" r="1.22"/><circle cx="165.0" cy="418.4" r="1.22"/><circle cx="165.7" cy="418.0" r="1.22"/><circle cx="166.4" cy="417.3" r="1.22"/><circle cx="167.0" cy="418.0" r="1.22"/><circle cx="167.7" cy="433.1" r="1.22"/><circle cx="168.4" cy="416.9" r="1.22"/><circle cx="169.1" cy="417.9" r="1.22"/><circle cx="169.7" cy="416.6" r="1.22"/><circle cx="170.4" cy="418.1" r="1.22"/><circle cx="171.1" cy="417.1" r="1.22"/><circle cx="171.8" cy="417.9" r="1.22"/><circle cx="172.4" cy="416.6" r="1.22"/><circle cx="173.1" cy="417.8" r="1.22"/><circle cx="173.8" cy="417.3" r="1.22"/><circle cx="174.4" cy="416.9" r="1.22"/><circle cx="175.1" cy="419.1" r="1.22"/><circle cx="175.8" cy="420.7" r="1.22"/><circle cx="176.5" cy="423.1" r="1.22"/><circle cx="177.1" cy="422.8" r="1.22"/><circle cx="177.8" cy="421.7" r="1.22"/><circle cx="178.5" cy="417.7" r="1.22"/><circle cx="179.2" cy="416.8" r="1.22"/><circle cx="179.8" cy="416.9" r="1.22"/><circle cx="180.5" cy="418.7" r="1.22"/><circle cx="181.2" cy="418.0" r="1.22"/><circle cx="181.9" cy="418.0" r="1.22"/><circle cx="182.5" cy="416.9" r="1.22"/><circle cx="183.2" cy="417.7" r="1.22"/><circle cx="183.9" cy="417.7" r="1.22"/><circle cx="184.6" cy="418.5" r="1.22"/><circle cx="185.2" cy="416.9" r="1.22"/><circle cx="185.9" cy="418.2" r="1.22"/><circle cx="186.6" cy="418.0" r="1.22"/><circle cx="187.3" cy="418.2" r="1.22"/><circle cx="187.9" cy="417.1" r="1.22"/><circle cx="188.6" cy="418.1" r="1.22"/><circle cx="189.3" cy="416.9" r="1.22"/><circle cx="190.0" cy="418.0" r="1.22"/><circle cx="190.6" cy="417.3" r="1.22"/><circle cx="191.3" cy="417.7" r="1.22"/><circle cx="192.0" cy="416.7" r="1.22"/><circle cx="192.7" cy="416.9" r="1.22"/><circle cx="193.3" cy="417.2" r="1.22"/><circle cx="194.0" cy="417.4" r="1.22"/><circle cx="194.7" cy="418.5" r="1.22"/><circle cx="195.4" cy="416.9" r="1.22"/><circle cx="196.0" cy="416.7" r="1.22"/><circle cx="196.7" cy="416.6" r="1.22"/><circle cx="197.4" cy="417.7" r="1.22"/><circle cx="198.1" cy="418.2" r="1.22"/><circle cx="198.7" cy="418.1" r="1.22"/><circle cx="199.4" cy="416.9" r="1.22"/><circle cx="200.1" cy="418.2" r="1.22"/><circle cx="200.8" cy="416.6" r="1.22"/><circle cx="201.4" cy="418.1" r="1.22"/><circle cx="202.1" cy="417.1" r="1.22"/><circle cx="202.8" cy="418.9" r="1.22"/><circle cx="203.5" cy="416.9" r="1.22"/><circle cx="204.1" cy="417.6" r="1.22"/><circle cx="204.8" cy="429.0" r="1.22"/><circle cx="205.5" cy="425.6" r="1.22"/><circle cx="206.2" cy="422.1" r="1.22"/><circle cx="206.8" cy="421.2" r="1.22"/><circle cx="207.5" cy="423.2" r="1.22"/><circle cx="208.2" cy="420.7" r="1.22"/><circle cx="208.8" cy="420.7" r="1.22"/><circle cx="209.5" cy="418.7" r="1.22"/><circle cx="210.2" cy="418.2" r="1.22"/><circle cx="210.9" cy="417.3" r="1.22"/><circle cx="211.5" cy="418.2" r="1.22"/><circle cx="212.2" cy="416.9" r="1.22"/><circle cx="212.9" cy="417.5" r="1.22"/><circle cx="213.6" cy="418.0" r="1.22"/><circle cx="214.2" cy="418.8" r="1.22"/><circle cx="214.9" cy="416.9" r="1.22"/><circle cx="215.6" cy="417.4" r="1.22"/><circle cx="216.3" cy="417.7" r="1.22"/><circle cx="216.9" cy="429.0" r="1.22"/><circle cx="217.6" cy="418.3" r="1.22"/><circle cx="218.3" cy="418.0" r="1.22"/><circle cx="219.0" cy="417.3" r="1.22"/><circle cx="219.6" cy="417.5" r="1.22"/><circle cx="220.3" cy="424.8" r="1.22"/><circle cx="221.0" cy="425.4" r="1.22"/><circle cx="221.7" cy="437.2" r="1.22"/><circle cx="222.3" cy="424.8" r="1.22"/><circle cx="223.0" cy="435.2" r="1.22"/><circle cx="223.7" cy="419.5" r="1.22"/><circle cx="224.4" cy="418.8" r="1.22"/><circle cx="225.0" cy="418.7" r="1.22"/><circle cx="225.7" cy="422.1" r="1.22"/><circle cx="226.4" cy="424.8" r="1.22"/><circle cx="227.1" cy="426.9" r="1.22"/><circle cx="227.7" cy="424.0" r="1.22"/><circle cx="228.4" cy="420.7" r="1.22"/><circle cx="229.1" cy="420.7" r="1.22"/><circle cx="229.8" cy="435.2" r="1.22"/><circle cx="230.4" cy="424.8" r="1.22"/><circle cx="231.1" cy="417.5" r="1.22"/><circle cx="231.8" cy="416.9" r="1.22"/><circle cx="232.5" cy="416.2" r="1.22"/><circle cx="233.1" cy="416.6" r="1.22"/><circle cx="233.8" cy="424.8" r="1.22"/><circle cx="234.5" cy="433.1" r="1.22"/><circle cx="235.2" cy="431.1" r="1.22"/><circle cx="235.8" cy="430.7" r="1.22"/><circle cx="236.5" cy="427.6" r="1.22"/><circle cx="237.2" cy="425.0" r="1.22"/><circle cx="237.9" cy="425.2" r="1.22"/><circle cx="238.5" cy="420.7" r="1.22"/><circle cx="239.2" cy="420.6" r="1.22"/><circle cx="239.9" cy="421.6" r="1.22"/><circle cx="240.5" cy="418.7" r="1.22"/><circle cx="241.2" cy="417.0" r="1.22"/><circle cx="241.9" cy="417.9" r="1.22"/><circle cx="242.6" cy="416.6" r="1.22"/><circle cx="243.2" cy="420.1" r="1.22"/><circle cx="243.9" cy="422.1" r="1.22"/><circle cx="244.6" cy="447.5" r="1.22"/><circle cx="245.3" cy="421.4" r="1.22"/><circle cx="245.9" cy="420.7" r="1.22"/><circle cx="246.6" cy="424.8" r="1.22"/><circle cx="247.3" cy="423.7" r="1.22"/><circle cx="248.0" cy="422.1" r="1.22"/><circle cx="248.6" cy="416.6" r="1.22"/><circle cx="249.3" cy="416.8" r="1.22"/><circle cx="250.0" cy="416.9" r="1.22"/><circle cx="250.7" cy="439.3" r="1.22"/><circle cx="251.3" cy="433.1" r="1.22"/><circle cx="252.0" cy="416.7" r="1.22"/><circle cx="252.7" cy="416.6" r="1.22"/><circle cx="253.4" cy="417.2" r="1.22"/><circle cx="254.0" cy="431.0" r="1.22"/><circle cx="254.7" cy="421.4" r="1.22"/><circle cx="255.4" cy="420.7" r="1.22"/><circle cx="256.1" cy="416.6" r="1.22"/><circle cx="256.7" cy="417.0" r="1.22"/><circle cx="257.4" cy="433.1" r="1.22"/><circle cx="258.1" cy="433.2" r="1.22"/><circle cx="258.8" cy="444.8" r="1.22"/><circle cx="259.4" cy="443.4" r="1.22"/><circle cx="260.1" cy="440.0" r="1.22"/><circle cx="260.8" cy="438.5" r="1.22"/><circle cx="261.5" cy="435.8" r="1.22"/><circle cx="262.1" cy="434.8" r="1.22"/><circle cx="262.8" cy="431.7" r="1.22"/><circle cx="263.5" cy="417.2" r="1.22"/><circle cx="264.2" cy="416.6" r="1.22"/><circle cx="264.8" cy="417.0" r="1.22"/><circle cx="265.5" cy="426.2" r="1.22"/><circle cx="266.2" cy="424.8" r="1.22"/><circle cx="266.9" cy="425.2" r="1.22"/><circle cx="267.5" cy="437.2" r="1.22"/><circle cx="268.2" cy="438.6" r="1.22"/><circle cx="268.9" cy="441.4" r="1.22"/><circle cx="269.6" cy="442.7" r="1.22"/><circle cx="270.2" cy="418.7" r="1.22"/><circle cx="270.9" cy="419.2" r="1.22"/><circle cx="271.6" cy="418.0" r="1.22"/><circle cx="272.3" cy="418.6" r="1.22"/><circle cx="272.9" cy="418.7" r="1.22"/><circle cx="273.6" cy="440.0" r="1.22"/><circle cx="274.3" cy="444.1" r="1.22"/><circle cx="274.9" cy="442.7" r="1.22"/><circle cx="275.6" cy="440.0" r="1.22"/><circle cx="276.3" cy="441.3" r="1.22"/><circle cx="277.0" cy="449.6" r="1.22"/><circle cx="277.6" cy="453.6" r="1.22"/><circle cx="278.3" cy="455.1" r="1.22"/><circle cx="279.0" cy="459.9" r="1.22"/><circle cx="279.7" cy="441.8" r="1.22"/><circle cx="280.3" cy="441.3" r="1.22"/><circle cx="281.0" cy="451.6" r="1.22"/><circle cx="281.7" cy="438.1" r="1.22"/><circle cx="282.4" cy="437.2" r="1.22"/><circle cx="283.0" cy="438.2" r="1.22"/><circle cx="283.7" cy="446.8" r="1.22"/><circle cx="284.4" cy="446.6" r="1.22"/><circle cx="285.1" cy="444.1" r="1.22"/><circle cx="285.7" cy="448.9" r="1.22"/><circle cx="286.4" cy="438.0" r="1.22"/><circle cx="287.1" cy="437.2" r="1.22"/><circle cx="287.8" cy="447.5" r="1.22"/><circle cx="288.4" cy="425.1" r="1.22"/><circle cx="289.1" cy="425.3" r="1.22"/><circle cx="289.8" cy="424.8" r="1.22"/><circle cx="290.5" cy="435.8" r="1.22"/><circle cx="291.1" cy="436.0" r="1.22"/><circle cx="291.8" cy="445.5" r="1.22"/><circle cx="292.5" cy="445.5" r="1.22"/><circle cx="293.2" cy="445.5" r="1.22"/><circle cx="293.8" cy="417.5" r="1.22"/><circle cx="294.5" cy="416.6" r="1.22"/><circle cx="295.2" cy="432.4" r="1.22"/><circle cx="295.9" cy="433.1" r="1.22"/><circle cx="296.5" cy="430.1" r="1.22"/><circle cx="297.2" cy="426.9" r="1.22"/><circle cx="297.9" cy="445.5" r="1.22"/><circle cx="298.6" cy="447.6" r="1.22"/><circle cx="299.2" cy="449.6" r="1.22"/><circle cx="299.9" cy="459.9" r="1.22"/><circle cx="300.6" cy="440.0" r="1.22"/><circle cx="301.3" cy="439.3" r="1.22"/><circle cx="301.9" cy="429.1" r="1.22"/><circle cx="302.6" cy="429.0" r="1.22"/><circle cx="303.3" cy="427.4" r="1.22"/><circle cx="304.0" cy="426.2" r="1.22"/><circle cx="304.6" cy="416.6" r="1.22"/><circle cx="305.3" cy="426.2" r="1.22"/><circle cx="306.0" cy="417.4" r="1.22"/><circle cx="306.7" cy="417.3" r="1.22"/><circle cx="307.3" cy="420.7" r="1.22"/><circle cx="308.0" cy="420.2" r="1.22"/><circle cx="308.7" cy="420.7" r="1.22"/><circle cx="309.3" cy="419.9" r="1.22"/><circle cx="310.0" cy="417.3" r="1.22"/><circle cx="310.7" cy="416.3" r="1.22"/><circle cx="311.4" cy="416.6" r="1.22"/><circle cx="312.0" cy="418.4" r="1.22"/><circle cx="312.7" cy="416.6" r="1.22"/><circle cx="313.4" cy="418.6" r="1.22"/><circle cx="314.1" cy="417.4" r="1.22"/><circle cx="314.7" cy="417.3" r="1.22"/><circle cx="315.4" cy="422.8" r="1.22"/><circle cx="316.1" cy="425.5" r="1.22"/><circle cx="316.8" cy="429.0" r="1.22"/><circle cx="317.4" cy="455.8" r="1.22"/><circle cx="318.1" cy="442.2" r="1.22"/><circle cx="318.8" cy="441.3" r="1.22"/><circle cx="319.5" cy="429.0" r="1.22"/><circle cx="320.1" cy="430.7" r="1.22"/><circle cx="320.8" cy="429.0" r="1.22"/><circle cx="321.5" cy="437.2" r="1.22"/><circle cx="322.2" cy="448.2" r="1.22"/><circle cx="322.8" cy="449.6" r="1.22"/><circle cx="323.5" cy="449.6" r="1.22"/><circle cx="324.2" cy="450.1" r="1.22"/><circle cx="324.9" cy="447.5" r="1.22"/><circle cx="325.5" cy="434.5" r="1.22"/><circle cx="326.2" cy="419.6" r="1.22"/><circle cx="326.9" cy="418.7" r="1.22"/><circle cx="327.6" cy="434.5" r="1.22"/><circle cx="328.2" cy="434.5" r="1.22"/><circle cx="328.9" cy="444.1" r="1.22"/><circle cx="329.6" cy="443.7" r="1.22"/><circle cx="330.3" cy="441.3" r="1.22"/><circle cx="330.9" cy="438.5" r="1.22"/><circle cx="331.6" cy="436.5" r="1.22"/><circle cx="332.3" cy="451.6" r="1.22"/><circle cx="333.0" cy="437.4" r="1.22"/><circle cx="333.6" cy="437.2" r="1.22"/><circle cx="334.3" cy="429.2" r="1.22"/><circle cx="335.0" cy="429.0" r="1.22"/><circle cx="335.7" cy="430.5" r="1.22"/><circle cx="336.3" cy="431.0" r="1.22"/><circle cx="337.0" cy="431.4" r="1.22"/><circle cx="337.7" cy="443.4" r="1.22"/><circle cx="338.4" cy="433.1" r="1.22"/><circle cx="339.0" cy="433.5" r="1.22"/><circle cx="339.7" cy="457.8" r="1.22"/><circle cx="340.4" cy="441.7" r="1.22"/><circle cx="341.1" cy="441.3" r="1.22"/><circle cx="341.7" cy="433.1" r="1.22"/><circle cx="342.4" cy="433.4" r="1.22"/><circle cx="343.1" cy="449.6" r="1.22"/><circle cx="343.7" cy="451.2" r="1.22"/><circle cx="344.4" cy="452.3" r="1.22"/><circle cx="345.1" cy="462.0" r="1.22"/><circle cx="345.8" cy="439.3" r="1.22"/><circle cx="346.4" cy="429.5" r="1.22"/><circle cx="347.1" cy="430.0" r="1.22"/><circle cx="347.8" cy="429.0" r="1.22"/><circle cx="348.5" cy="432.7" r="1.22"/><circle cx="349.1" cy="433.1" r="1.22"/><circle cx="349.8" cy="434.5" r="1.22"/><circle cx="350.5" cy="418.7" r="1.22"/><circle cx="351.2" cy="419.4" r="1.22"/><circle cx="351.8" cy="435.2" r="1.22"/><circle cx="352.5" cy="447.5" r="1.22"/><circle cx="353.2" cy="433.8" r="1.22"/><circle cx="353.9" cy="433.6" r="1.22"/><circle cx="354.5" cy="433.1" r="1.22"/><circle cx="355.2" cy="433.6" r="1.22"/><circle cx="355.9" cy="443.4" r="1.22"/><circle cx="356.6" cy="422.8" r="1.22"/><circle cx="357.2" cy="423.4" r="1.22"/><circle cx="357.9" cy="451.6" r="1.22"/><circle cx="358.6" cy="427.8" r="1.22"/><circle cx="359.3" cy="426.9" r="1.22"/><circle cx="359.9" cy="427.7" r="1.22"/><circle cx="360.6" cy="426.9" r="1.22"/><circle cx="361.3" cy="425.3" r="1.22"/><circle cx="362.0" cy="422.8" r="1.22"/><circle cx="362.6" cy="436.5" r="1.22"/><circle cx="363.3" cy="437.1" r="1.22"/><circle cx="364.0" cy="437.0" r="1.22"/><circle cx="364.7" cy="445.5" r="1.22"/><circle cx="365.3" cy="443.1" r="1.22"/><circle cx="366.0" cy="444.1" r="1.22"/><circle cx="366.7" cy="441.3" r="1.22"/><circle cx="367.4" cy="433.7" r="1.22"/><circle cx="368.0" cy="433.1" r="1.22"/><circle cx="368.7" cy="433.7" r="1.22"/><circle cx="369.4" cy="433.7" r="1.22"/><circle cx="370.1" cy="433.1" r="1.22"/><circle cx="370.7" cy="422.8" r="1.22"/><circle cx="371.4" cy="423.1" r="1.22"/><circle cx="372.1" cy="445.5" r="1.22"/><circle cx="372.8" cy="433.8" r="1.22"/><circle cx="373.4" cy="433.1" r="1.22"/><circle cx="374.1" cy="436.2" r="1.22"/><circle cx="374.8" cy="437.2" r="1.22"/><circle cx="375.4" cy="451.6" r="1.22"/><circle cx="376.1" cy="429.6" r="1.22"/><circle cx="376.8" cy="429.0" r="1.22"/><circle cx="377.5" cy="427.6" r="1.22"/><circle cx="378.1" cy="424.8" r="1.22"/><circle cx="378.8" cy="424.9" r="1.22"/><circle cx="379.5" cy="433.1" r="1.22"/><circle cx="380.2" cy="433.6" r="1.22"/><circle cx="380.8" cy="443.4" r="1.22"/><circle cx="381.5" cy="442.8" r="1.22"/><circle cx="382.2" cy="443.0" r="1.22"/><circle cx="382.9" cy="441.3" r="1.22"/><circle cx="383.5" cy="424.8" r="1.22"/><circle cx="384.2" cy="422.4" r="1.22"/><circle cx="384.9" cy="420.7" r="1.22"/><circle cx="385.6" cy="443.4" r="1.22"/><circle cx="386.2" cy="446.0" r="1.22"/><circle cx="386.9" cy="446.8" r="1.22"/><circle cx="387.6" cy="449.6" r="1.22"/><circle cx="388.3" cy="437.2" r="1.22"/><circle cx="388.9" cy="438.1" r="1.22"/><circle cx="389.6" cy="451.6" r="1.22"/><circle cx="390.3" cy="447.5" r="1.22"/><circle cx="391.0" cy="445.4" r="1.22"/><circle cx="391.6" cy="443.4" r="1.22"/><circle cx="392.3" cy="443.9" r="1.22"/><circle cx="393.0" cy="451.6" r="1.22"/><circle cx="393.7" cy="454.1" r="1.22"/><circle cx="394.3" cy="455.8" r="1.22"/><circle cx="395.0" cy="433.1" r="1.22"/><circle cx="395.7" cy="437.2" r="1.22"/><circle cx="396.4" cy="437.6" r="1.22"/><circle cx="397.0" cy="448.2" r="1.22"/><circle cx="397.7" cy="445.3" r="1.22"/><circle cx="398.4" cy="441.3" r="1.22"/><circle cx="399.1" cy="451.6" r="1.22"/><circle cx="399.7" cy="437.7" r="1.22"/><circle cx="400.4" cy="437.2" r="1.22"/><circle cx="401.1" cy="431.0" r="1.22"/><circle cx="401.8" cy="432.9" r="1.22"/><circle cx="402.4" cy="432.3" r="1.22"/><circle cx="403.1" cy="433.1" r="1.22"/><circle cx="403.8" cy="439.3" r="1.22"/><circle cx="404.5" cy="417.6" r="1.22"/><circle cx="405.1" cy="416.6" r="1.22"/><circle cx="405.8" cy="416.5" r="1.22"/><circle cx="406.5" cy="417.3" r="1.22"/><circle cx="407.2" cy="417.8" r="1.22"/><circle cx="407.8" cy="416.6" r="1.22"/><circle cx="408.5" cy="422.8" r="1.22"/><circle cx="409.2" cy="431.0" r="1.22"/><circle cx="409.8" cy="443.4" r="1.22"/><circle cx="410.5" cy="443.6" r="1.22"/><circle cx="411.2" cy="453.7" r="1.22"/><circle cx="411.9" cy="468.1" r="1.22"/><circle cx="412.5" cy="445.5" r="1.22"/><circle cx="413.2" cy="439.3" r="1.22"/><circle cx="413.9" cy="442.8" r="1.22"/><circle cx="414.6" cy="445.5" r="1.22"/><circle cx="415.2" cy="451.6" r="1.22"/><circle cx="415.9" cy="440.2" r="1.22"/><circle cx="416.6" cy="439.3" r="1.22"/><circle cx="417.3" cy="437.2" r="1.22"/><circle cx="417.9" cy="426.5" r="1.22"/><circle cx="418.6" cy="426.2" r="1.22"/><circle cx="419.3" cy="436.5" r="1.22"/><circle cx="420.0" cy="435.4" r="1.22"/><circle cx="420.6" cy="435.2" r="1.22"/><circle cx="421.3" cy="438.1" r="1.22"/><circle cx="422.0" cy="439.3" r="1.22"/><circle cx="422.7" cy="420.7" r="1.22"/><circle cx="423.3" cy="431.0" r="1.22"/><circle cx="424.0" cy="439.3" r="1.22"/><circle cx="424.7" cy="416.7" r="1.22"/><circle cx="425.4" cy="416.6" r="1.22"/><circle cx="426.0" cy="416.7" r="1.22"/><circle cx="426.7" cy="433.1" r="1.22"/><circle cx="427.4" cy="418.1" r="1.22"/><circle cx="428.1" cy="417.3" r="1.22"/><circle cx="428.7" cy="416.9" r="1.22"/><circle cx="429.4" cy="418.1" r="1.22"/><circle cx="430.1" cy="417.7" r="1.22"/><circle cx="430.8" cy="417.8" r="1.22"/><circle cx="431.4" cy="416.9" r="1.22"/><circle cx="432.1" cy="418.5" r="1.22"/><circle cx="432.8" cy="417.4" r="1.22"/><circle cx="433.5" cy="417.8" r="1.22"/><circle cx="434.1" cy="416.9" r="1.22"/><circle cx="434.8" cy="420.0" r="1.22"/><circle cx="435.5" cy="420.7" r="1.22"/><circle cx="436.2" cy="418.3" r="1.22"/><circle cx="436.8" cy="418.8" r="1.22"/><circle cx="437.5" cy="416.9" r="1.22"/><circle cx="438.2" cy="418.3" r="1.22"/><circle cx="438.9" cy="417.4" r="1.22"/><circle cx="439.5" cy="418.8" r="1.22"/><circle cx="440.2" cy="416.9" r="1.22"/><circle cx="440.9" cy="416.2" r="1.22"/><circle cx="441.6" cy="416.6" r="1.22"/><circle cx="442.2" cy="418.1" r="1.22"/><circle cx="442.9" cy="420.7" r="1.22"/><circle cx="443.6" cy="419.0" r="1.22"/><circle cx="444.2" cy="416.9" r="1.22"/><circle cx="444.9" cy="417.8" r="1.22"/><circle cx="445.6" cy="416.6" r="1.22"/><circle cx="446.3" cy="417.5" r="1.22"/><circle cx="446.9" cy="417.4" r="1.22"/><circle cx="447.6" cy="416.9" r="1.22"/><circle cx="448.3" cy="420.0" r="1.22"/><circle cx="449.0" cy="420.7" r="1.22"/><circle cx="449.6" cy="418.5" r="1.22"/><circle cx="450.3" cy="416.9" r="1.22"/><circle cx="451.0" cy="416.6" r="1.22"/><circle cx="451.7" cy="417.3" r="1.22"/><circle cx="452.3" cy="418.7" r="1.22"/><circle cx="453.0" cy="433.1" r="1.22"/><circle cx="453.7" cy="435.2" r="1.22"/><circle cx="454.4" cy="437.2" r="1.22"/><circle cx="455.0" cy="441.3" r="1.22"/><circle cx="455.7" cy="440.7" r="1.22"/><circle cx="456.4" cy="439.3" r="1.22"/><circle cx="457.1" cy="418.7" r="1.22"/><circle cx="457.7" cy="419.9" r="1.22"/><circle cx="458.4" cy="420.7" r="1.22"/><circle cx="459.1" cy="435.2" r="1.22"/><circle cx="459.8" cy="438.3" r="1.22"/><circle cx="460.4" cy="441.3" r="1.22"/><circle cx="461.1" cy="444.1" r="1.22"/><circle cx="461.8" cy="449.6" r="1.22"/><circle cx="462.5" cy="437.2" r="1.22"/><circle cx="463.1" cy="441.0" r="1.22"/><circle cx="463.8" cy="444.1" r="1.22"/><circle cx="464.5" cy="455.8" r="1.22"/><circle cx="465.2" cy="447.7" r="1.22"/><circle cx="465.8" cy="447.5" r="1.22"/><circle cx="466.5" cy="455.8" r="1.22"/><circle cx="467.2" cy="441.3" r="1.22"/><circle cx="467.9" cy="447.5" r="1.22"/><circle cx="468.5" cy="448.4" r="1.22"/><circle cx="469.2" cy="455.8" r="1.22"/><circle cx="469.9" cy="445.5" r="1.22"/><circle cx="470.6" cy="447.3" r="1.22"/><circle cx="471.2" cy="446.8" r="1.22"/><circle cx="471.9" cy="449.6" r="1.22"/><circle cx="472.6" cy="452.7" r="1.22"/><circle cx="473.3" cy="453.7" r="1.22"/><circle cx="473.9" cy="449.6" r="1.22"/><circle cx="474.6" cy="445.5" r="1.22"/><circle cx="475.3" cy="431.6" r="1.22"/><circle cx="476.0" cy="431.0" r="1.22"/><circle cx="476.6" cy="441.3" r="1.22"/><circle cx="477.3" cy="447.5" r="1.22"/><circle cx="478.0" cy="433.1" r="1.22"/><circle cx="478.6" cy="433.7" r="1.22"/><circle cx="479.3" cy="459.9" r="1.22"/><circle cx="480.0" cy="457.0" r="1.22"/><circle cx="480.7" cy="453.7" r="1.22"/><circle cx="481.3" cy="447.5" r="1.22"/><circle cx="482.0" cy="433.4" r="1.22"/><circle cx="482.7" cy="433.1" r="1.22"/><circle cx="483.4" cy="445.5" r="1.22"/><circle cx="484.0" cy="445.6" r="1.22"/><circle cx="484.7" cy="457.8" r="1.22"/><circle cx="485.4" cy="457.8" r="1.22"/><circle cx="486.1" cy="437.2" r="1.22"/><circle cx="486.7" cy="441.9" r="1.22"/><circle cx="487.4" cy="443.4" r="1.22"/><circle cx="488.1" cy="431.8" r="1.22"/><circle cx="488.8" cy="431.0" r="1.22"/><circle cx="489.4" cy="437.2" r="1.22"/><circle cx="490.1" cy="455.8" r="1.22"/><circle cx="490.8" cy="441.3" r="1.22"/><circle cx="491.5" cy="426.9" r="1.22"/><circle cx="492.1" cy="429.6" r="1.22"/><circle cx="492.8" cy="431.0" r="1.22"/><circle cx="493.5" cy="422.8" r="1.22"/><circle cx="494.2" cy="435.2" r="1.22"/><circle cx="494.8" cy="435.5" r="1.22"/><circle cx="495.5" cy="447.5" r="1.22"/><circle cx="496.2" cy="451.6" r="1.22"/><circle cx="496.9" cy="451.9" r="1.22"/><circle cx="497.5" cy="459.9" r="1.22"/><circle cx="498.2" cy="437.6" r="1.22"/><circle cx="498.9" cy="437.2" r="1.22"/><circle cx="499.6" cy="455.8" r="1.22"/><circle cx="500.2" cy="439.3" r="1.22"/><circle cx="500.9" cy="418.7" r="1.22"/><circle cx="501.6" cy="417.9" r="1.22"/><circle cx="502.3" cy="418.7" r="1.22"/><circle cx="502.9" cy="429.0" r="1.22"/><circle cx="503.6" cy="427.1" r="1.22"/><circle cx="504.3" cy="424.8" r="1.22"/><circle cx="505.0" cy="416.6" r="1.22"/><circle cx="505.6" cy="447.5" r="1.22"/><circle cx="506.3" cy="448.4" r="1.22"/><circle cx="507.0" cy="449.6" r="1.22"/><circle cx="507.7" cy="431.0" r="1.22"/><circle cx="508.3" cy="432.8" r="1.22"/><circle cx="509.0" cy="433.1" r="1.22"/><circle cx="509.7" cy="440.0" r="1.22"/><circle cx="510.3" cy="437.2" r="1.22"/><circle cx="511.0" cy="440.0" r="1.22"/><circle cx="511.7" cy="441.3" r="1.22"/><circle cx="512.4" cy="453.7" r="1.22"/><circle cx="513.0" cy="451.8" r="1.22"/><circle cx="513.7" cy="447.5" r="1.22"/><circle cx="514.4" cy="449.6" r="1.22"/><circle cx="515.1" cy="449.6" r="1.22"/><circle cx="515.7" cy="441.4" r="1.22"/><circle cx="516.4" cy="441.3" r="1.22"/><circle cx="517.1" cy="445.0" r="1.22"/><circle cx="517.8" cy="445.5" r="1.22"/><circle cx="518.4" cy="446.2" r="1.22"/><circle cx="519.1" cy="453.7" r="1.22"/><circle cx="519.8" cy="437.2" r="1.22"/><circle cx="520.5" cy="437.4" r="1.22"/><circle cx="521.1" cy="447.5" r="1.22"/><circle cx="521.8" cy="446.9" r="1.22"/><circle cx="522.5" cy="444.1" r="1.22"/><circle cx="523.2" cy="437.2" r="1.22"/><circle cx="523.8" cy="453.7" r="1.22"/><circle cx="524.5" cy="459.9" r="1.22"/><circle cx="525.2" cy="450.3" r="1.22"/><circle cx="525.9" cy="449.6" r="1.22"/><circle cx="526.5" cy="447.6" r="1.22"/><circle cx="527.2" cy="445.5" r="1.22"/><circle cx="527.9" cy="444.4" r="1.22"/><circle cx="528.6" cy="443.4" r="1.22"/><circle cx="529.2" cy="443.8" r="1.22"/><circle cx="529.9" cy="453.7" r="1.22"/><circle cx="530.6" cy="452.8" r="1.22"/><circle cx="531.3" cy="449.6" r="1.22"/><circle cx="531.9" cy="439.9" r="1.22"/><circle cx="532.6" cy="439.3" r="1.22"/><circle cx="533.3" cy="455.8" r="1.22"/><circle cx="534.0" cy="457.7" r="1.22"/><circle cx="534.6" cy="457.8" r="1.22"/><circle cx="535.3" cy="453.7" r="1.22"/><circle cx="536.0" cy="443.4" r="1.22"/><circle cx="536.7" cy="441.8" r="1.22"/><circle cx="537.3" cy="441.3" r="1.22"/><circle cx="538.0" cy="438.9" r="1.22"/><circle cx="538.7" cy="435.8" r="1.22"/><circle cx="539.4" cy="435.0" r="1.22"/><circle cx="540.0" cy="435.2" r="1.22"/><circle cx="540.7" cy="434.6" r="1.22"/><circle cx="541.4" cy="433.1" r="1.22"/><circle cx="542.1" cy="447.5" r="1.22"/><circle cx="542.7" cy="437.9" r="1.22"/><circle cx="543.4" cy="437.2" r="1.22"/><circle cx="544.1" cy="447.5" r="1.22"/><circle cx="544.7" cy="429.0" r="1.22"/><circle cx="545.4" cy="427.7" r="1.22"/><circle cx="546.1" cy="426.9" r="1.22"/><circle cx="546.8" cy="428.2" r="1.22"/><circle cx="547.4" cy="426.9" r="1.22"/><circle cx="548.1" cy="427.8" r="1.22"/><circle cx="548.8" cy="427.3" r="1.22"/><circle cx="549.5" cy="426.6" r="1.22"/><circle cx="550.1" cy="426.9" r="1.22"/><circle cx="550.8" cy="433.1" r="1.22"/><circle cx="551.5" cy="433.9" r="1.22"/><circle cx="552.2" cy="434.5" r="1.22"/><circle cx="552.8" cy="445.5" r="1.22"/><circle cx="553.5" cy="433.1" r="1.22"/><circle cx="554.2" cy="433.6" r="1.22"/><circle cx="554.9" cy="433.1" r="1.22"/><circle cx="555.5" cy="431.3" r="1.22"/><circle cx="556.2" cy="429.0" r="1.22"/><circle cx="556.9" cy="427.9" r="1.22"/><circle cx="557.6" cy="426.9" r="1.22"/><circle cx="558.2" cy="427.8" r="1.22"/><circle cx="558.9" cy="427.3" r="1.22"/><circle cx="559.6" cy="427.8" r="1.22"/><circle cx="560.3" cy="427.1" r="1.22"/><circle cx="560.9" cy="426.9" r="1.22"/><circle cx="561.6" cy="428.7" r="1.22"/><circle cx="562.3" cy="427.3" r="1.22"/><circle cx="563.0" cy="426.9" r="1.22"/><circle cx="563.6" cy="426.9" r="1.22"/><circle cx="564.3" cy="430.5" r="1.22"/><circle cx="565.0" cy="433.1" r="1.22"/><circle cx="565.7" cy="434.5" r="1.22"/><circle cx="566.3" cy="433.1" r="1.22"/><circle cx="567.0" cy="430.5" r="1.22"/><circle cx="567.7" cy="429.0" r="1.22"/><circle cx="568.4" cy="426.9" r="1.22"/><circle cx="569.0" cy="447.5" r="1.22"/><circle cx="569.7" cy="426.9" r="1.22"/><circle cx="570.4" cy="426.9" r="1.22"/><circle cx="571.1" cy="428.5" r="1.22"/><circle cx="571.7" cy="426.9" r="1.22"/><circle cx="572.4" cy="441.3" r="1.22"/><circle cx="573.1" cy="427.5" r="1.22"/><circle cx="573.8" cy="426.9" r="1.22"/><circle cx="574.4" cy="427.0" r="1.22"/><circle cx="575.1" cy="427.3" r="1.22"/><circle cx="575.8" cy="428.0" r="1.22"/><circle cx="576.5" cy="429.0" r="1.22"/><circle cx="577.1" cy="428.3" r="1.22"/><circle cx="577.8" cy="426.9" r="1.22"/><circle cx="578.5" cy="427.0" r="1.22"/><circle cx="579.1" cy="427.6" r="1.22"/><circle cx="579.8" cy="427.2" r="1.22"/><circle cx="580.5" cy="426.9" r="1.22"/><circle cx="581.2" cy="429.8" r="1.22"/><circle cx="581.8" cy="431.0" r="1.22"/><circle cx="582.5" cy="430.0" r="1.22"/><circle cx="583.2" cy="426.9" r="1.22"/><circle cx="583.9" cy="428.3" r="1.22"/><circle cx="584.5" cy="427.3" r="1.22"/><circle cx="585.2" cy="428.3" r="1.22"/><circle cx="585.9" cy="429.0" r="1.22"/><circle cx="586.6" cy="437.2" r="1.22"/><circle cx="587.2" cy="447.5" r="1.22"/><circle cx="587.9" cy="441.3" r="1.22"/><circle cx="588.6" cy="433.5" r="1.22"/><circle cx="589.3" cy="433.1" r="1.22"/><circle cx="589.9" cy="437.2" r="1.22"/><circle cx="590.6" cy="447.5" r="1.22"/><circle cx="591.3" cy="439.3" r="1.22"/><circle cx="592.0" cy="439.3" r="1.22"/><circle cx="592.6" cy="439.3" r="1.22"/><circle cx="593.3" cy="455.8" r="1.22"/><circle cx="594.0" cy="453.5" r="1.22"/><circle cx="594.7" cy="449.6" r="1.22"/><circle cx="595.3" cy="457.8" r="1.22"/><circle cx="596.0" cy="458.2" r="1.22"/><circle cx="596.7" cy="457.8" r="1.22"/><circle cx="597.4" cy="442.3" r="1.22"/><circle cx="598.0" cy="441.3" r="1.22"/><circle cx="598.7" cy="439.2" r="1.22"/><circle cx="599.4" cy="437.2" r="1.22"/><circle cx="600.1" cy="436.0" r="1.22"/><circle cx="600.7" cy="433.1" r="1.22"/><circle cx="601.4" cy="429.0" r="1.22"/><circle cx="602.1" cy="424.8" r="1.22"/><circle cx="602.8" cy="425.9" r="1.22"/><circle cx="603.4" cy="426.9" r="1.22"/><circle cx="604.1" cy="430.2" r="1.22"/><circle cx="604.8" cy="431.0" r="1.22"/><circle cx="605.5" cy="428.5" r="1.22"/><circle cx="606.1" cy="426.9" r="1.22"/><circle cx="606.8" cy="427.2" r="1.22"/><circle cx="607.5" cy="426.9" r="1.22"/><circle cx="608.2" cy="429.7" r="1.22"/><circle cx="608.8" cy="431.0" r="1.22"/><circle cx="609.5" cy="433.1" r="1.22"/><circle cx="610.2" cy="425.3" r="1.22"/><circle cx="610.9" cy="425.0" r="1.22"/><circle cx="611.5" cy="424.8" r="1.22"/><circle cx="612.2" cy="428.0" r="1.22"/><circle cx="612.9" cy="429.0" r="1.22"/><circle cx="613.5" cy="433.1" r="1.22"/><circle cx="614.2" cy="432.2" r="1.22"/><circle cx="614.9" cy="429.0" r="1.22"/><circle cx="615.6" cy="428.9" r="1.22"/><circle cx="616.2" cy="426.9" r="1.22"/><circle cx="616.9" cy="429.5" r="1.22"/><circle cx="617.6" cy="431.0" r="1.22"/><circle cx="618.3" cy="428.6" r="1.22"/><circle cx="618.9" cy="426.9" r="1.22"/><circle cx="619.6" cy="451.6" r="1.22"/><circle cx="620.3" cy="433.1" r="1.22"/><circle cx="621.0" cy="431.6" r="1.22"/><circle cx="621.6" cy="429.0" r="1.22"/><circle cx="622.3" cy="429.0" r="1.22"/><circle cx="623.0" cy="441.3" r="1.22"/><circle cx="623.7" cy="439.6" r="1.22"/><circle cx="624.3" cy="439.3" r="1.22"/><circle cx="625.0" cy="429.0" r="1.22"/><circle cx="625.7" cy="429.1" r="1.22"/><circle cx="626.4" cy="437.2" r="1.22"/><circle cx="627.0" cy="429.5" r="1.22"/><circle cx="627.7" cy="429.1" r="1.22"/><circle cx="628.4" cy="429.0" r="1.22"/><circle cx="629.1" cy="429.1" r="1.22"/><circle cx="629.7" cy="429.0" r="1.22"/><circle cx="630.4" cy="429.0" r="1.22"/><circle cx="631.1" cy="431.9" r="1.22"/><circle cx="631.8" cy="433.1" r="1.22"/><circle cx="632.4" cy="431.9" r="1.22"/><circle cx="633.1" cy="431.0" r="1.22"/><circle cx="633.8" cy="428.9" r="1.22"/><circle cx="634.5" cy="426.9" r="1.22"/><circle cx="635.1" cy="427.9" r="1.22"/><circle cx="635.8" cy="443.4" r="1.22"/><circle cx="636.5" cy="442.0" r="1.22"/><circle cx="637.2" cy="439.3" r="1.22"/><circle cx="637.8" cy="425.1" r="1.22"/><circle cx="638.5" cy="424.8" r="1.22"/><circle cx="639.2" cy="425.9" r="1.22"/><circle cx="639.9" cy="426.9" r="1.22"/><circle cx="640.5" cy="428.3" r="1.22"/><circle cx="641.2" cy="429.0" r="1.22"/><circle cx="641.9" cy="430.6" r="1.22"/><circle cx="642.6" cy="431.0" r="1.22"/><circle cx="643.2" cy="431.6" r="1.22"/><circle cx="643.9" cy="447.5" r="1.22"/><circle cx="644.6" cy="445.5" r="1.22"/><circle cx="645.2" cy="441.3" r="1.22"/><circle cx="645.9" cy="433.1" r="1.22"/><circle cx="646.6" cy="431.0" r="1.22"/><circle cx="647.3" cy="426.9" r="1.22"/><circle cx="647.9" cy="428.9" r="1.22"/><circle cx="648.6" cy="428.5" r="1.22"/><circle cx="649.3" cy="429.0" r="1.22"/><circle cx="650.0" cy="431.6" r="1.22"/><circle cx="650.6" cy="431.0" r="1.22"/><circle cx="651.3" cy="468.1" r="1.22"/><circle cx="652.0" cy="451.6" r="1.22"/><circle cx="652.7" cy="455.8" r="1.22"/><circle cx="653.3" cy="446.0" r="1.22"/><circle cx="654.0" cy="445.5" r="1.22"/><circle cx="654.7" cy="437.2" r="1.22"/><circle cx="655.4" cy="438.0" r="1.22"/><circle cx="656.0" cy="447.5" r="1.22"/><circle cx="656.7" cy="433.1" r="1.22"/><circle cx="657.4" cy="430.1" r="1.22"/><circle cx="658.1" cy="426.9" r="1.22"/><circle cx="658.7" cy="426.9" r="1.22"/><circle cx="659.4" cy="435.2" r="1.22"/><circle cx="660.1" cy="426.9" r="1.22"/><circle cx="660.8" cy="428.1" r="1.22"/><circle cx="661.4" cy="427.3" r="1.22"/><circle cx="662.1" cy="426.3" r="1.22"/><circle cx="662.8" cy="426.9" r="1.22"/><circle cx="663.5" cy="428.4" r="1.22"/><circle cx="664.1" cy="427.3" r="1.22"/><circle cx="664.8" cy="428.3" r="1.22"/><circle cx="665.5" cy="426.9" r="1.22"/><circle cx="666.2" cy="427.3" r="1.22"/><circle cx="666.8" cy="427.7" r="1.22"/><circle cx="667.5" cy="435.2" r="1.22"/><circle cx="668.2" cy="443.4" r="1.22"/><circle cx="668.9" cy="459.9" r="1.22"/><circle cx="669.5" cy="445.5" r="1.22"/><circle cx="670.2" cy="443.0" r="1.22"/><circle cx="670.9" cy="439.3" r="1.22"/><circle cx="671.6" cy="439.3" r="1.22"/><circle cx="672.2" cy="429.1" r="1.22"/><circle cx="672.9" cy="429.0" r="1.22"/><circle cx="673.6" cy="428.2" r="1.22"/><circle cx="674.3" cy="426.9" r="1.22"/><circle cx="674.9" cy="429.9" r="1.22"/><circle cx="675.6" cy="433.1" r="1.22"/><circle cx="676.3" cy="437.2" r="1.22"/><circle cx="677.0" cy="441.3" r="1.22"/><circle cx="677.6" cy="441.9" r="1.22"/><circle cx="678.3" cy="443.4" r="1.22"/><circle cx="679.0" cy="427.3" r="1.22"/><circle cx="679.6" cy="426.9" r="1.22"/><circle cx="680.3" cy="437.2" r="1.22"/><circle cx="681.0" cy="433.1" r="1.22"/><circle cx="681.7" cy="433.3" r="1.22"/><circle cx="682.3" cy="441.3" r="1.22"/><circle cx="683.0" cy="438.2" r="1.22"/><circle cx="683.7" cy="435.2" r="1.22"/><circle cx="684.4" cy="427.2" r="1.22"/><circle cx="685.0" cy="426.9" r="1.22"/><circle cx="685.7" cy="428.3" r="1.22"/><circle cx="686.4" cy="426.9" r="1.22"/><circle cx="687.1" cy="441.3" r="1.22"/><circle cx="687.7" cy="455.8" r="1.22"/><circle cx="688.4" cy="437.2" r="1.22"/><circle cx="689.1" cy="434.6" r="1.22"/><circle cx="689.8" cy="431.0" r="1.22"/><circle cx="690.4" cy="429.7" r="1.22"/><circle cx="691.1" cy="426.9" r="1.22"/><circle cx="691.8" cy="427.1" r="1.22"/><circle cx="692.5" cy="437.2" r="1.22"/><circle cx="693.1" cy="431.0" r="1.22"/><circle cx="693.8" cy="431.6" r="1.22"/><circle cx="694.5" cy="433.1" r="1.22"/><circle cx="695.2" cy="437.2" r="1.22"/><circle cx="695.8" cy="436.0" r="1.22"/><circle cx="696.5" cy="433.1" r="1.22"/><circle cx="697.2" cy="429.7" r="1.22"/><circle cx="697.9" cy="426.9" r="1.22"/><circle cx="698.5" cy="428.3" r="1.22"/><circle cx="699.2" cy="426.9" r="1.22"/><circle cx="699.9" cy="427.6" r="1.22"/><circle cx="700.6" cy="435.2" r="1.22"/><circle cx="701.2" cy="433.1" r="1.22"/><circle cx="701.9" cy="434.2" r="1.22"/><circle cx="702.6" cy="435.2" r="1.22"/><circle cx="703.3" cy="429.0" r="1.22"/><circle cx="703.9" cy="443.4" r="1.22"/><circle cx="704.6" cy="441.3" r="1.22"/><circle cx="705.3" cy="437.2" r="1.22"/><circle cx="706.0" cy="438.1" r="1.22"/><circle cx="706.6" cy="439.3" r="1.22"/><circle cx="707.3" cy="442.7" r="1.22"/><circle cx="708.0" cy="445.5" r="1.22"/><circle cx="708.7" cy="448.7" r="1.22"/><circle cx="709.3" cy="449.6" r="1.22"/><circle cx="710.0" cy="443.4" r="1.22"/><circle cx="710.7" cy="442.7" r="1.22"/><circle cx="711.4" cy="439.3" r="1.22"/><circle cx="712.0" cy="443.3" r="1.22"/><circle cx="712.7" cy="445.5" r="1.22"/><circle cx="713.4" cy="446.4" r="1.22"/><circle cx="714.0" cy="447.5" r="1.22"/><circle cx="714.7" cy="439.3" r="1.22"/><circle cx="715.4" cy="439.3" r="1.22"/><circle cx="716.1" cy="441.7" r="1.22"/><circle cx="716.7" cy="441.3" r="1.22"/><circle cx="717.4" cy="438.1" r="1.22"/><circle cx="718.1" cy="435.2" r="1.22"/><circle cx="718.8" cy="435.4" r="1.22"/><circle cx="719.4" cy="445.5" r="1.22"/><circle cx="720.1" cy="445.8" r="1.22"/><circle cx="720.8" cy="447.5" r="1.22"/><circle cx="721.5" cy="429.0" r="1.22"/><circle cx="722.1" cy="439.3" r="1.22"/><circle cx="722.8" cy="429.5" r="1.22"/><circle cx="723.5" cy="429.0" r="1.22"/><circle cx="724.2" cy="432.0" r="1.22"/><circle cx="724.8" cy="433.1" r="1.22"/><circle cx="725.5" cy="464.0" r="1.22"/><circle cx="726.2" cy="431.0" r="1.22"/><circle cx="726.9" cy="429.6" r="1.22"/><circle cx="727.5" cy="426.9" r="1.22"/><circle cx="728.2" cy="427.0" r="1.22"/><circle cx="728.9" cy="426.9" r="1.22"/><circle cx="729.6" cy="437.2" r="1.22"/><circle cx="730.2" cy="437.4" r="1.22"/><circle cx="730.9" cy="445.5" r="1.22"/><circle cx="731.6" cy="433.1" r="1.22"/><circle cx="732.3" cy="431.7" r="1.22"/><circle cx="732.9" cy="426.9" r="1.22"/><circle cx="733.6" cy="428.8" r="1.22"/><circle cx="734.3" cy="429.0" r="1.22"/><circle cx="735.0" cy="429.2" r="1.22"/><circle cx="735.6" cy="431.0" r="1.22"/><circle cx="736.3" cy="439.3" r="1.22"/><circle cx="737.0" cy="436.5" r="1.22"/><circle cx="737.7" cy="435.2" r="1.22"/><circle cx="738.3" cy="435.6" r="1.22"/><circle cx="739.0" cy="443.4" r="1.22"/><circle cx="739.7" cy="443.8" r="1.22"/><circle cx="740.4" cy="441.3" r="1.22"/><circle cx="741.0" cy="445.5" r="1.22"/><circle cx="741.7" cy="437.8" r="1.22"/><circle cx="742.4" cy="437.2" r="1.22"/><circle cx="743.1" cy="440.8" r="1.22"/><circle cx="743.7" cy="443.4" r="1.22"/><circle cx="744.4" cy="434.0" r="1.22"/><circle cx="745.1" cy="433.1" r="1.22"/><circle cx="745.8" cy="432.0" r="1.22"/><circle cx="746.4" cy="429.0" r="1.22"/><circle cx="747.1" cy="439.3" r="1.22"/><circle cx="747.8" cy="429.4" r="1.22"/><circle cx="748.4" cy="429.0" r="1.22"/><circle cx="749.1" cy="439.3" r="1.22"/><circle cx="749.8" cy="429.1" r="1.22"/><circle cx="750.5" cy="429.0" r="1.22"/><circle cx="751.1" cy="429.8" r="1.22"/><circle cx="751.8" cy="441.3" r="1.22"/><circle cx="752.5" cy="447.5" r="1.22"/><circle cx="753.2" cy="437.2" r="1.22"/><circle cx="753.8" cy="438.9" r="1.22"/><circle cx="754.5" cy="439.3" r="1.22"/><circle cx="755.2" cy="442.5" r="1.22"/><circle cx="755.9" cy="443.4" r="1.22"/><circle cx="756.5" cy="427.4" r="1.22"/><circle cx="757.2" cy="426.9" r="1.22"/><circle cx="757.9" cy="428.6" r="1.22"/><circle cx="758.6" cy="431.0" r="1.22"/><circle cx="759.2" cy="437.2" r="1.22"/><circle cx="759.9" cy="451.6" r="1.22"/><circle cx="760.6" cy="439.6" r="1.22"/><circle cx="761.3" cy="439.3" r="1.22"/><circle cx="761.9" cy="445.5" r="1.22"/><circle cx="762.6" cy="448.7" r="1.22"/><circle cx="763.3" cy="451.6" r="1.22"/><circle cx="764.0" cy="443.4" r="1.22"/><circle cx="764.6" cy="429.5" r="1.22"/><circle cx="765.3" cy="429.0" r="1.22"/><circle cx="766.0" cy="429.7" r="1.22"/><circle cx="766.7" cy="437.2" r="1.22"/><circle cx="767.3" cy="440.1" r="1.22"/><circle cx="768.0" cy="441.3" r="1.22"/><circle cx="768.7" cy="431.0" r="1.22"/><circle cx="769.4" cy="433.1" r="1.22"/><circle cx="770.0" cy="435.2" r="1.22"/><circle cx="770.7" cy="435.5" r="1.22"/><circle cx="771.4" cy="445.5" r="1.22"/><circle cx="772.1" cy="451.6" r="1.22"/><circle cx="772.7" cy="445.1" r="1.22"/><circle cx="773.4" cy="444.1" r="1.22"/><circle cx="774.1" cy="441.4" r="1.22"/><circle cx="774.8" cy="437.2" r="1.22"/><circle cx="775.4" cy="439.3" r="1.22"/><circle cx="776.1" cy="439.3" r="1.22"/><circle cx="776.8" cy="439.4" r="1.22"/><circle cx="777.5" cy="447.5" r="1.22"/><circle cx="778.1" cy="445.3" r="1.22"/><circle cx="778.8" cy="443.4" r="1.22"/><circle cx="779.5" cy="435.2" r="1.22"/><circle cx="780.1" cy="436.0" r="1.22"/><circle cx="780.8" cy="447.5" r="1.22"/><circle cx="781.5" cy="435.8" r="1.22"/><circle cx="782.2" cy="436.2" r="1.22"/><circle cx="782.8" cy="437.2" r="1.22"/><circle cx="783.5" cy="438.2" r="1.22"/><circle cx="784.2" cy="447.5" r="1.22"/><circle cx="784.9" cy="445.8" r="1.22"/><circle cx="785.5" cy="443.4" r="1.22"/><circle cx="786.2" cy="436.5" r="1.22"/><circle cx="786.9" cy="427.9" r="1.22"/><circle cx="787.6" cy="426.9" r="1.22"/><circle cx="788.2" cy="433.1" r="1.22"/><circle cx="788.9" cy="441.3" r="1.22"/><circle cx="789.6" cy="443.5" r="1.22"/><circle cx="790.3" cy="445.5" r="1.22"/><circle cx="790.9" cy="435.0" r="1.22"/><circle cx="791.6" cy="434.5" r="1.22"/><circle cx="792.3" cy="433.6" r="1.22"/><circle cx="793.0" cy="433.1" r="1.22"/><circle cx="793.6" cy="429.9" r="1.22"/><circle cx="794.3" cy="426.9" r="1.22"/><circle cx="795.0" cy="433.1" r="1.22"/><circle cx="795.7" cy="437.2" r="1.22"/><circle cx="796.3" cy="445.5" r="1.22"/><circle cx="797.0" cy="445.8" r="1.22"/><circle cx="797.7" cy="457.8" r="1.22"/><circle cx="798.4" cy="451.6" r="1.22"/><circle cx="799.0" cy="448.9" r="1.22"/><circle cx="799.7" cy="447.5" r="1.22"/><circle cx="800.4" cy="439.3" r="1.22"/><circle cx="801.1" cy="442.9" r="1.22"/><circle cx="801.7" cy="443.4" r="1.22"/><circle cx="802.4" cy="426.9" r="1.22"/><circle cx="803.1" cy="427.9" r="1.22"/><circle cx="803.8" cy="426.9" r="1.22"/><circle cx="804.4" cy="426.7" r="1.22"/><circle cx="805.1" cy="426.9" r="1.22"/><circle cx="805.8" cy="428.7" r="1.22"/><circle cx="806.5" cy="431.0" r="1.22"/><circle cx="807.1" cy="437.2" r="1.22"/><circle cx="807.8" cy="447.5" r="1.22"/><circle cx="808.5" cy="448.0" r="1.22"/><circle cx="809.2" cy="457.8" r="1.22"/><circle cx="809.8" cy="435.2" r="1.22"/><circle cx="810.5" cy="431.0" r="1.22"/><circle cx="811.2" cy="449.6" r="1.22"/><circle cx="811.9" cy="439.6" r="1.22"/><circle cx="812.5" cy="439.3" r="1.22"/><circle cx="813.2" cy="426.9" r="1.22"/><circle cx="813.9" cy="427.2" r="1.22"/><circle cx="814.5" cy="426.9" r="1.22"/><circle cx="815.2" cy="427.2" r="1.22"/><circle cx="815.9" cy="435.2" r="1.22"/><circle cx="816.6" cy="437.3" r="1.22"/><circle cx="817.2" cy="437.2" r="1.22"/><circle cx="817.9" cy="445.5" r="1.22"/><circle cx="818.6" cy="453.7" r="1.22"/><circle cx="819.3" cy="443.8" r="1.22"/><circle cx="819.9" cy="443.4" r="1.22"/><circle cx="820.6" cy="441.3" r="1.22"/><circle cx="821.3" cy="431.1" r="1.22"/><circle cx="822.0" cy="431.0" r="1.22"/><circle cx="822.6" cy="426.9" r="1.22"/><circle cx="823.3" cy="428.4" r="1.22"/><circle cx="824.0" cy="426.9" r="1.22"/><circle cx="824.7" cy="427.6" r="1.22"/><circle cx="825.3" cy="437.2" r="1.22"/><circle cx="826.0" cy="439.3" r="1.22"/><circle cx="826.7" cy="427.9" r="1.22"/><circle cx="827.4" cy="426.9" r="1.22"/><circle cx="828.0" cy="433.1" r="1.22"/><circle cx="828.7" cy="435.1" r="1.22"/><circle cx="829.4" cy="437.2" r="1.22"/><circle cx="830.1" cy="427.3" r="1.22"/><circle cx="830.7" cy="426.9" r="1.22"/><circle cx="831.4" cy="426.9" r="1.22"/><circle cx="832.1" cy="424.8" r="1.22"/><circle cx="832.8" cy="426.5" r="1.22"/><circle cx="833.4" cy="426.9" r="1.22"/><circle cx="834.1" cy="426.7" r="1.22"/><circle cx="834.8" cy="425.9" r="1.22"/><circle cx="835.5" cy="425.8" r="1.22"/><circle cx="836.1" cy="426.5" r="1.22"/><circle cx="836.8" cy="427.2" r="1.22"/><circle cx="837.5" cy="425.9" r="1.22"/><circle cx="838.2" cy="425.9" r="1.22"/><circle cx="838.8" cy="426.5" r="1.22"/><circle cx="839.5" cy="431.1" r="1.22"/><circle cx="840.2" cy="433.1" r="1.22"/><circle cx="840.9" cy="470.2" r="1.22"/><circle cx="841.5" cy="426.9" r="1.22"/><circle cx="842.2" cy="435.2" r="1.22"/><circle cx="842.9" cy="426.9" r="1.22"/><circle cx="843.6" cy="426.9" r="1.22"/><circle cx="844.2" cy="427.9" r="1.22"/><circle cx="844.9" cy="426.2" r="1.22"/><circle cx="845.6" cy="426.2" r="1.22"/><circle cx="846.3" cy="425.9" r="1.22"/><circle cx="846.9" cy="427.3" r="1.22"/><circle cx="847.6" cy="426.5" r="1.22"/><circle cx="848.3" cy="429.0" r="1.22"/><circle cx="848.9" cy="427.5" r="1.22"/><circle cx="849.6" cy="426.2" r="1.22"/><circle cx="850.3" cy="425.9" r="1.22"/><circle cx="851.0" cy="425.9" r="1.22"/><circle cx="851.6" cy="425.3" r="1.22"/><circle cx="852.3" cy="426.5" r="1.22"/><circle cx="853.0" cy="430.4" r="1.22"/><circle cx="853.7" cy="433.1" r="1.22"/><circle cx="854.3" cy="430.1" r="1.22"/><circle cx="855.0" cy="426.2" r="1.22"/><circle cx="855.7" cy="427.8" r="1.22"/><circle cx="856.4" cy="426.5" r="1.22"/><circle cx="857.0" cy="431.0" r="1.22"/><circle cx="857.7" cy="431.1" r="1.22"/><circle cx="858.4" cy="429.0" r="1.22"/><circle cx="859.1" cy="433.4" r="1.22"/><circle cx="859.7" cy="435.2" r="1.22"/><circle cx="860.4" cy="439.3" r="1.22"/><circle cx="861.1" cy="437.6" r="1.22"/><circle cx="861.8" cy="435.2" r="1.22"/><circle cx="862.3" cy="429.0" r="1.22"/></g><path d="M37.8 540.4H862.3" stroke="#b4cbe6" stroke-width="1" fill="none"/><path d="M37.8 539.3H862.3" stroke="#ff9a55" stroke-width="1.1" fill="none"/><path d="M50.20 539.5L50.40 471.90H51.60L51.80 539.5ZM57.10 539.5L57.30 471.90H58.50L58.70 539.5ZM61.80 539.5L62.00 471.90H63.20L63.40 539.5ZM77.40 539.5L77.60 471.90H78.80L79.00 539.5ZM84.20 539.5L84.40 471.90H85.60L85.80 539.5ZM87.50 539.5L87.70 471.90H88.90L89.10 539.5ZM101.00 539.5L101.20 471.90H102.40L102.60 539.5ZM140.90 539.5L141.10 471.90H142.30L142.50 539.5ZM166.30 539.5L166.50 471.90H167.70L167.90 539.5ZM228.70 539.5L228.90 471.90H230.10L230.30 539.5ZM243.20 539.5L243.40 471.90H244.60L244.80 539.5ZM249.00 539.5L249.20 471.90H250.40L250.60 539.5ZM278.00 539.5L278.20 471.90H279.40L279.60 539.5ZM316.10 539.5L316.30 471.90H317.50L317.70 539.5ZM343.70 539.5L343.90 471.90H345.10L345.30 539.5ZM356.60 539.5L356.80 471.90H358.00L358.20 539.5ZM374.10 539.5L374.30 471.90H375.50L375.70 539.5ZM410.60 539.5L410.80 471.90H412.00L412.20 539.5ZM463.60 539.5L463.80 471.90H465.00L465.20 539.5ZM489.20 539.5L489.40 471.90H490.60L490.80 539.5ZM517.90 539.5L518.10 471.90H519.30L519.50 539.5ZM567.80 539.5L568.00 471.90H569.20L569.40 539.5ZM618.80 539.5L619.00 471.90H620.20L620.40 539.5ZM650.20 539.5L650.40 471.90H651.60L651.80 539.5ZM668.00 539.5L668.20 471.90H669.40L669.60 539.5ZM687.60 539.5L687.80 471.90H689.00L689.20 539.5ZM724.40 539.5L724.60 471.90H725.80L726.00 539.5ZM745.30 539.5L745.50 471.90H746.70L746.90 539.5ZM771.00 539.5L771.20 471.90H772.40L772.60 539.5ZM807.40 539.5L807.60 471.90H808.80L809.00 539.5ZM839.30 539.5L839.50 471.90H840.70L840.90 539.5Z" fill="#ff9256"/><path d="M49.95 540.1L50.30 512H51.70L52.05 540.1ZM56.85 540.1L57.20 512H58.60L58.95 540.1ZM61.55 540.1L61.90 515.8H63.30L63.65 540.1ZM77.15 540.1L77.50 512H78.90L79.25 540.1ZM83.95 540.1L84.30 508.8H85.70L86.05 540.1ZM87.25 540.1L87.60 519.3H89.00L89.35 540.1ZM100.75 540.1L101.10 512H102.50L102.85 540.1ZM140.65 540.1L141.00 505.8H142.40L142.75 540.1ZM166.05 540.1L166.40 512H167.80L168.15 540.1ZM228.45 540.1L228.80 505.8H230.20L230.55 540.1ZM242.95 540.1L243.30 505.8H244.70L245.05 540.1ZM248.75 540.1L249.10 519.3H250.50L250.85 540.1ZM277.75 540.1L278.10 502.2H279.50L279.85 540.1ZM315.85 540.1L316.20 498.7H317.60L317.95 540.1ZM343.45 540.1L343.80 502.2H345.20L345.55 540.1ZM356.35 540.1L356.70 516H358.10L358.45 540.1ZM373.85 540.1L374.20 502.2H375.60L375.95 540.1ZM410.35 540.1L410.70 505.6H412.10L412.45 540.1ZM463.35 540.1L463.70 505.6H465.10L465.45 540.1ZM488.95 540.1L489.30 498.7H490.70L491.05 540.1ZM517.65 540.1L518.00 502.2H519.40L519.75 540.1ZM567.55 540.1L567.90 502.2H569.30L569.65 540.1ZM618.55 540.1L618.90 502.2H620.30L620.65 540.1ZM649.95 540.1L650.30 498.7H651.70L652.05 540.1ZM667.75 540.1L668.10 516H669.50L669.85 540.1ZM687.35 540.1L687.70 505.6H689.10L689.45 540.1ZM724.15 540.1L724.50 502.2H725.90L726.25 540.1ZM745.05 540.1L745.40 516H746.80L747.15 540.1ZM770.75 540.1L771.10 502.2H772.50L772.85 540.1ZM807.15 540.1L807.50 502.2H808.90L809.25 540.1ZM839.05 540.1L839.40 481.5H840.80L841.15 540.1Z" fill="#7d92d6"/><circle cx="51.0" cy="471.90" r="4.1" fill="#f05060" opacity=".3"/><circle cx="51.0" cy="471.90" r="2.5" fill="#f04050" opacity=".35"/><circle cx="51.0" cy="471.90" r="1.25" fill="#e8101c"/><circle cx="57.9" cy="471.90" r="4.1" fill="#f05060" opacity=".3"/><circle cx="57.9" cy="471.90" r="2.5" fill="#f04050" opacity=".35"/><circle cx="57.9" cy="471.90" r="1.25" fill="#e8101c"/><rect x="61.70" y="471.00" width="1.8" height="1.8" fill="#ff7a1a"/><circle cx="78.2" cy="471.90" r="4.1" fill="#f05060" opacity=".3"/><circle cx="78.2" cy="471.90" r="2.5" fill="#f04050" opacity=".35"/><circle cx="78.2" cy="471.90" r="1.25" fill="#e8101c"/><circle cx="85.0" cy="471.90" r="4.1" fill="#f05060" opacity=".3"/><circle cx="85.0" cy="471.90" r="2.5" fill="#f04050" opacity=".35"/><circle cx="85.0" cy="471.90" r="1.25" fill="#e8101c"/><rect x="87.40" y="471.00" width="1.8" height="1.8" fill="#ff7a1a"/><circle cx="101.8" cy="471.90" r="4.1" fill="#f05060" opacity=".3"/><circle cx="101.8" cy="471.90" r="2.5" fill="#f04050" opacity=".35"/><circle cx="101.8" cy="471.90" r="1.25" fill="#e8101c"/><circle cx="141.7" cy="471.90" r="4.1" fill="#f05060" opacity=".3"/><circle cx="141.7" cy="471.90" r="2.5" fill="#f04050" opacity=".35"/><circle cx="141.7" cy="471.90" r="1.25" fill="#e8101c"/><circle cx="167.1" cy="471.90" r="4.1" fill="#f05060" opacity=".3"/><circle cx="167.1" cy="471.90" r="2.5" fill="#f04050" opacity=".35"/><circle cx="167.1" cy="471.90" r="1.25" fill="#e8101c"/><circle cx="229.5" cy="471.90" r="4.1" fill="#f05060" opacity=".3"/><circle cx="229.5" cy="471.90" r="2.5" fill="#f04050" opacity=".35"/><circle cx="229.5" cy="471.90" r="1.25" fill="#e8101c"/><circle cx="244.0" cy="471.90" r="4.1" fill="#f05060" opacity=".3"/><circle cx="244.0" cy="471.90" r="2.5" fill="#f04050" opacity=".35"/><circle cx="244.0" cy="471.90" r="1.25" fill="#e8101c"/><rect x="248.90" y="471.00" width="1.8" height="1.8" fill="#ff7a1a"/><circle cx="278.8" cy="471.90" r="4.1" fill="#f05060" opacity=".3"/><circle cx="278.8" cy="471.90" r="2.5" fill="#f04050" opacity=".35"/><circle cx="278.8" cy="471.90" r="1.25" fill="#e8101c"/><circle cx="316.9" cy="471.90" r="4.1" fill="#f05060" opacity=".3"/><circle cx="316.9" cy="471.90" r="2.5" fill="#f04050" opacity=".35"/><circle cx="316.9" cy="471.90" r="1.25" fill="#e8101c"/><circle cx="344.5" cy="471.90" r="4.1" fill="#f05060" opacity=".3"/><circle cx="344.5" cy="471.90" r="2.5" fill="#f04050" opacity=".35"/><circle cx="344.5" cy="471.90" r="1.25" fill="#e8101c"/><rect x="356.50" y="471.00" width="1.8" height="1.8" fill="#ff7a1a"/><circle cx="374.9" cy="471.90" r="4.1" fill="#f05060" opacity=".3"/><circle cx="374.9" cy="471.90" r="2.5" fill="#f04050" opacity=".35"/><circle cx="374.9" cy="471.90" r="1.25" fill="#e8101c"/><circle cx="411.4" cy="471.90" r="4.1" fill="#f05060" opacity=".3"/><circle cx="411.4" cy="471.90" r="2.5" fill="#f04050" opacity=".35"/><circle cx="411.4" cy="471.90" r="1.25" fill="#e8101c"/><circle cx="464.4" cy="471.90" r="4.1" fill="#f05060" opacity=".3"/><circle cx="464.4" cy="471.90" r="2.5" fill="#f04050" opacity=".35"/><circle cx="464.4" cy="471.90" r="1.25" fill="#e8101c"/><circle cx="490.0" cy="471.90" r="4.1" fill="#f05060" opacity=".3"/><circle cx="490.0" cy="471.90" r="2.5" fill="#f04050" opacity=".35"/><circle cx="490.0" cy="471.90" r="1.25" fill="#e8101c"/><circle cx="518.7" cy="471.90" r="4.1" fill="#f05060" opacity=".3"/><circle cx="518.7" cy="471.90" r="2.5" fill="#f04050" opacity=".35"/><circle cx="518.7" cy="471.90" r="1.25" fill="#e8101c"/><circle cx="568.6" cy="471.90" r="4.1" fill="#f05060" opacity=".3"/><circle cx="568.6" cy="471.90" r="2.5" fill="#f04050" opacity=".35"/><circle cx="568.6" cy="471.90" r="1.25" fill="#e8101c"/><circle cx="619.6" cy="471.90" r="4.1" fill="#f05060" opacity=".3"/><circle cx="619.6" cy="471.90" r="2.5" fill="#f04050" opacity=".35"/><circle cx="619.6" cy="471.90" r="1.25" fill="#e8101c"/><circle cx="651.0" cy="471.90" r="4.1" fill="#f05060" opacity=".3"/><circle cx="651.0" cy="471.90" r="2.5" fill="#f04050" opacity=".35"/><circle cx="651.0" cy="471.90" r="1.25" fill="#e8101c"/><rect x="667.90" y="471.00" width="1.8" height="1.8" fill="#ff7a1a"/><circle cx="688.4" cy="471.90" r="4.1" fill="#f05060" opacity=".3"/><circle cx="688.4" cy="471.90" r="2.5" fill="#f04050" opacity=".35"/><circle cx="688.4" cy="471.90" r="1.25" fill="#e8101c"/><circle cx="725.2" cy="471.90" r="4.1" fill="#f05060" opacity=".3"/><circle cx="725.2" cy="471.90" r="2.5" fill="#f04050" opacity=".35"/><circle cx="725.2" cy="471.90" r="1.25" fill="#e8101c"/><rect x="745.20" y="471.00" width="1.8" height="1.8" fill="#ff7a1a"/><circle cx="771.8" cy="471.90" r="4.1" fill="#f05060" opacity=".3"/><circle cx="771.8" cy="471.90" r="2.5" fill="#f04050" opacity=".35"/><circle cx="771.8" cy="471.90" r="1.25" fill="#e8101c"/><circle cx="808.2" cy="471.90" r="4.1" fill="#f05060" opacity=".3"/><circle cx="808.2" cy="471.90" r="2.5" fill="#f04050" opacity=".35"/><circle cx="808.2" cy="471.90" r="1.25" fill="#e8101c"/><circle cx="840.1" cy="471.90" r="4.1" fill="#f05060" opacity=".3"/><circle cx="840.1" cy="471.90" r="2.5" fill="#f04050" opacity=".35"/><circle cx="840.1" cy="471.90" r="1.25" fill="#e8101c"/><defs><linearGradient id="sl" x1="0" y1="0" x2="0" y2="1"><stop offset="0" stop-color="#6cc0f7"/><stop offset=".18" stop-color="#2ea6f3"/><stop offset=".85" stop-color="#2aa2f1"/><stop offset="1" stop-color="#5ab6f4"/></linearGradient></defs><rect x="43.8" y="557.2" width="812.5" height="7.7" fill="url(#sl)"/><rect x="37.4" y="555.4" width="12.2" height="11.3" rx="2.2" fill="#dfe0e4" stroke="#bcbec8" stroke-width=".9"/><path d="M40.8 559.3h5.6M40.8 561h5.6M40.8 562.7h5.6" stroke="#8389a6" stroke-width="1.2"/><rect x="850" y="555.4" width="12.2" height="11.3" rx="2.2" fill="#dfe0e4" stroke="#bcbec8" stroke-width=".9"/><path d="M853.4 559.3h5.6M853.4 561h5.6M853.4 562.7h5.6" stroke="#8389a6" stroke-width="1.2"/><path d="M337.3 575.2h8.4" stroke="#c23cc2" stroke-width="1.1"/><circle cx="341.5" cy="575.2" r="1.3" fill="#c23cc2"/><text x="351.8" y="577.8" font-size="7.5" fill="#333" textLength="12.2" lengthAdjust="spacingAndGlyphs">FPS</text><path d="M375 575.2h8.4" stroke="#ff7f2a" stroke-width="1.1"/><circle cx="379.2" cy="575.2" r="1.3" fill="#ff7f2a"/><text x="389.4" y="577.8" font-size="7.5" fill="#333" textLength="14.4" lengthAdjust="spacingAndGlyphs">Jank</text><path d="M416.2 575.2h8.4" stroke="#f04848" stroke-width="1.1"/><text x="431.3" y="577.8" font-size="7.5" fill="#333" textLength="24" lengthAdjust="spacingAndGlyphs">BigJank</text><path d="M467.4 575.2h8.4" stroke="#5b8ff9" stroke-width="1.1"/><text x="481.8" y="577.8" font-size="7.5" fill="#333" textLength="21.7" lengthAdjust="spacingAndGlyphs">Stutter</text><path d="M515 575.2h8.4" stroke="#3cc8ee" stroke-width="1.1"/><text x="530" y="577.8" font-size="7.5" fill="#333" textLength="35" lengthAdjust="spacingAndGlyphs">InterFrame</text></svg>
<span class="q" style="left:311.00px;top:254.30px">?</span><span class="q" style="left:369.90px;top:253.60px">?</span><span class="q" style="left:429.60px;top:253.60px">?</span><span class="q" style="left:121.40px;top:305.10px">?</span>
<span class="t" id="t0" style="transform:translate(63.7px,14.90px) scaleX(0.9161);font-size:12px;line-height:16.8px;color:#fff;font-weight:bold;-webkit-text-stroke:.3px #fff;">原神</span><span class="t" id="t1" style="transform:translate(74.7px,33.70px) scaleX(0.9334);font-size:9px;line-height:12.6px;color:#fff;font-weight:normal;">Android版本名:</span><span class="t" id="t2" style="transform:translate(74.7px,44.00px) scaleX(0.8950);font-size:9px;line-height:12.6px;color:#fff;font-weight:normal;">2.6.0_6179196_6305792</span><span class="t" id="t3" style="transform:translate(74.7px,54.30px) scaleX(0.9200);font-size:9px;line-height:12.6px;color:#fff;font-weight:normal;">Android版本号: 363</span><span class="t" id="t4" style="transform:translate(63.7px,67.40px) scaleX(0.9181);font-size:9px;line-height:12.6px;color:#fff;font-weight:normal;">com.miHoYo.Yuanshen</span><span class="t" id="t5" style="transform:translate(11.25px,92.35px) scaleX(0.9172);font-size:8.5px;line-height:11.9px;color:#fff;font-weight:bold;">备注:</span><span class="t" id="t6" style="transform:translate(33.75px,92.35px) scaleX(0.9351);font-size:8.5px;line-height:11.9px;color:rgba(255,255,255,.45);font-weight:normal;">添加备注，不超过200个字符</span><span class="t" id="t7" style="transform:translate(293.4px,16.75px) scaleX(0.9737);font-size:12.5px;line-height:17.5px;color:#fff;font-weight:bold;-webkit-text-stroke:.25px #fff;">V2196A</span><span class="t" id="t8" style="transform:translate(293px,37.50px) scaleX(0.9485);font-size:9px;line-height:12.6px;color:#fff;font-weight:normal;">Memory: 11.1G</span><span class="t" id="t9" style="transform:translate(293px,52.50px) scaleX(0.9034);font-size:9px;line-height:12.6px;color:#fff;font-weight:normal;">CPU: taro</span><span class="t" id="t10" style="transform:translate(293px,66.90px) scaleX(0.9381);font-size:9px;line-height:12.6px;color:#fff;font-weight:normal;">GPU: Qualcomm Adreno (TM) 730</span><span class="t" id="t11" style="transform:translate(508px,23.80px) scaleX(0.9440);font-size:12px;line-height:16.8px;color:#fff;font-weight:bold;-webkit-text-stroke:.3px #fff;">创建者</span><span class="t" id="t12" style="transform:translate(508px,44.90px) scaleX(0.9385);font-size:9px;line-height:12.6px;color:#fff;font-weight:normal;">泡泡 网</span><span class="t" id="t13" style="transform:translate(626.5px,23.80px) scaleX(0.9452);font-size:12px;line-height:16.8px;color:#fff;font-weight:bold;-webkit-text-stroke:.3px #fff;">时长</span><span class="t" id="t14" style="transform:translate(626.5px,44.90px) scaleX(0.9930);font-size:9px;line-height:12.6px;color:#fff;font-weight:normal;">0h 20m 22s</span><span class="t" id="t15" style="transform:translate(758px,23.80px) scaleX(0.9414);font-size:12px;line-height:16.8px;color:#fff;font-weight:bold;-webkit-text-stroke:.3px #fff;">上传时间</span><span class="t" id="t16" style="transform:translate(758px,44.90px) scaleX(1.0112);font-size:9px;line-height:12.6px;color:#fff;font-weight:normal;">08/04/2022 13:54:20</span><span class="t" id="t17" style="transform:translate(746px,4.55px) scaleX(0.9576);font-size:8.5px;line-height:11.9px;color:rgba(255,255,255,.7);font-weight:normal;">数据由PerfDog(7.0.220332)版本收集</span><span class="t" id="t18" style="transform:translate(9.2px,122.85px) scaleX(0.9361);font-size:9.5px;line-height:13.3px;color:#4a6cf7;font-weight:normal;">概览</span><span class="t" id="t19" style="transform:translate(50px,122.50px) scaleX(0.7814);font-size:10px;line-height:14.0px;color:#3c3c3c;font-weight:normal;">FPS</span><span class="t" id="t20" style="transform:translate(88px,122.50px) scaleX(0.8521);font-size:10px;line-height:14.0px;color:#3c3c3c;font-weight:normal;">CPU</span><span class="t" id="t21" style="transform:translate(129px,122.50px) scaleX(1.0131);font-size:10px;line-height:14.0px;color:#3c3c3c;font-weight:normal;">Memory</span><span class="t" id="t22" style="transform:translate(188.3px,122.50px) scaleX(0.8629);font-size:10px;line-height:14.0px;color:#3c3c3c;font-weight:normal;">GPU</span><span class="t" id="t23" style="transform:translate(229.8px,122.50px) scaleX(1.0140);font-size:10px;line-height:14.0px;color:#3c3c3c;font-weight:normal;">Network</span><span class="t" id="t24" style="transform:translate(289.7px,122.50px) scaleX(0.9783);font-size:10px;line-height:14.0px;color:#3c3c3c;font-weight:normal;">Battery</span><span class="t" id="t25" style="transform:translate(16px,155.85px) scaleX(0.9783);font-size:11.5px;line-height:16.1px;color:#222;font-weight:bold;-webkit-text-stroke:.25px #222;">概览</span><span class="t" id="t26" style="transform:translate(830.7px,157.70px) scaleX(0.9688);font-size:8px;line-height:11.2px;color:#4a6cf7;font-weight:normal;text-decoration:underline;">导出全部</span><span class="t" id="t27" style="transform:translate(16px,203.35px) scaleX(0.8226);font-size:12.5px;line-height:17.5px;color:#222;font-weight:bold;-webkit-text-stroke:.2px #222;">FPS</span><span class="t" id="t28" style="transform:translate(41.7px,252.45px) translateX(-44.974%) scaleX(0.8995);font-size:8.5px;line-height:11.9px;color:#484848;font-weight:normal;">Avg(FPS)</span><span class="t" id="t29" style="transform:translate(42.0px,269.84px) translateX(-50.470%) scaleX(1.0094);font-size:14.8px;line-height:20.72px;color:#1c1c1c;font-weight:bold;">52.6</span><span class="t" id="t30" style="transform:translate(91px,252.45px) translateX(-44.544%) scaleX(0.8909);font-size:8.5px;line-height:11.9px;color:#484848;font-weight:normal;">Var(FPS)</span><span class="t" id="t31" style="transform:translate(91.3px,269.84px) translateX(-50.470%) scaleX(1.0094);font-size:14.8px;line-height:20.72px;color:#1c1c1c;font-weight:bold;">29.4</span><span class="t" id="t32" style="transform:translate(147.8px,252.45px) translateX(-47.960%) scaleX(0.9592);font-size:8.5px;line-height:11.9px;color:#484848;font-weight:normal;">FPS&gt;=18 [%]</span><span class="t" id="t33" style="transform:translate(148.10000000000002px,269.84px) translateX(-50.200%) scaleX(1.0040);font-size:14.8px;line-height:20.72px;color:#1c1c1c;font-weight:bold;">100</span><span class="t" id="t34" style="transform:translate(214.2px,252.45px) translateX(-48.850%) scaleX(0.9770);font-size:8.5px;line-height:11.9px;color:#484848;font-weight:normal;">FPS&gt;=25 [%]</span><span class="t" id="t35" style="transform:translate(214.5px,269.84px) translateX(-50.200%) scaleX(1.0040);font-size:14.8px;line-height:20.72px;color:#1c1c1c;font-weight:bold;">100</span><span class="t" id="t36" style="transform:translate(255.79999999999998px,252.45px) scaleX(0.9727);font-size:8.5px;line-height:11.9px;color:#484848;font-weight:normal;">Drop(FPS) [/h]</span><span class="t" id="t37" style="transform:translate(288.0px,269.84px) translateX(-50.470%) scaleX(1.0094);font-size:14.8px;line-height:20.72px;color:#1c1c1c;font-weight:bold;">70.7</span><span class="t" id="t38" style="transform:translate(352.3px,241.65px) translateX(-47.304%) scaleX(0.9461);font-size:8.5px;line-height:11.9px;color:#484848;font-weight:normal;">Jank</span><span class="t" id="t39" style="transform:translate(336.7px,252.65px) scaleX(1.0357);font-size:8.5px;line-height:11.9px;color:#484848;font-weight:normal;">(/10min)</span><span class="t" id="t40" style="transform:translate(358px,269.84px) translateX(-50.470%) scaleX(1.0094);font-size:14.8px;line-height:20.72px;color:#1c1c1c;font-weight:bold;">15.2</span><span class="t" id="t41" style="transform:translate(411.7px,241.65px) translateX(-47.107%) scaleX(0.9421);font-size:8.5px;line-height:11.9px;color:#484848;font-weight:normal;">BigJank</span><span class="t" id="t42" style="transform:translate(396px,252.65px) scaleX(1.0357);font-size:8.5px;line-height:11.9px;color:#484848;font-weight:normal;">(/10min)</span><span class="t" id="t43" style="transform:translate(417.6px,269.84px) translateX(-50.470%) scaleX(1.0094);font-size:14.8px;line-height:20.72px;color:#1c1c1c;font-weight:bold;">12.3</span><span class="t" id="t44" style="transform:translate(475.5px,252.45px) translateX(-49.890%) scaleX(0.9978);font-size:8.5px;line-height:11.9px;color:#484848;font-weight:normal;">Stutter [%]</span><span class="t" id="t45" style="transform:translate(475.8px,269.84px) translateX(-50.813%) scaleX(1.0163);font-size:14.8px;line-height:20.72px;color:#1c1c1c;font-weight:bold;">0.4</span><span class="t" id="t46" style="transform:translate(543px,252.45px) translateX(-49.405%) scaleX(0.9881);font-size:8.5px;line-height:11.9px;color:#484848;font-weight:normal;">Avg(InterFrame)</span><span class="t" id="t47" style="transform:translate(543.3px,269.84px) translateX(-49.516%) scaleX(0.9903);font-size:14.8px;line-height:20.72px;color:#1c1c1c;font-weight:bold;">0</span><span class="t" id="t48" style="transform:translate(630.5px,252.45px) translateX(-48.367%) scaleX(0.9673);font-size:8.5px;line-height:11.9px;color:#484848;font-weight:normal;">Avg(FPS+InterFrame)</span><span class="t" id="t49" style="transform:translate(630.8px,269.84px) translateX(-50.470%) scaleX(1.0094);font-size:14.8px;line-height:20.72px;color:#1c1c1c;font-weight:bold;">52.6</span><span class="t" id="t50" style="transform:translate(718px,252.45px) translateX(-49.323%) scaleX(0.9865);font-size:8.5px;line-height:11.9px;color:#484848;font-weight:normal;">Avg(FTime) [ms]</span><span class="t" id="t51" style="transform:translate(718.3px,269.84px) translateX(-49.564%) scaleX(0.9913);font-size:14.8px;line-height:20.72px;color:#1c1c1c;font-weight:bold;">19</span><span class="t" id="t52" style="transform:translate(802.7px,252.45px) translateX(-50.095%) scaleX(1.0019);font-size:8.5px;line-height:11.9px;color:#484848;font-weight:normal;">FTime&gt;=100ms [%]</span><span class="t" id="t53" style="transform:translate(803.0px,269.84px) translateX(-49.516%) scaleX(0.9903);font-size:14.8px;line-height:20.72px;color:#1c1c1c;font-weight:bold;">0</span><span class="t" id="t54" style="transform:translate(25px,304.45px) scaleX(1.0062);font-size:8.5px;line-height:11.9px;color:#484848;font-weight:normal;">Delta(FTime)&gt;100ms [/h]</span><span class="t" id="t55" style="transform:translate(77.7px,322.14px) translateX(-51.356%) scaleX(1.0271);font-size:14.8px;line-height:20.72px;color:#1c1c1c;font-weight:bold;">82.5</span><span class="t" id="t56" style="transform:translate(15.8px,357.00px) scaleX(0.9679);font-size:9px;line-height:12.6px;color:#000;font-weight:bold;-webkit-text-stroke:.2px #000;">FPS</span><span class="t" id="t57" style="transform:translate(721.6px,356.65px) scaleX(0.9463);font-size:8.5px;line-height:11.9px;color:#222;font-weight:normal;">FPS(&gt;=)</span><span class="t" id="t58" style="transform:translate(776px,356.65px) translateX(-47.525%) scaleX(0.9505);font-size:8.5px;line-height:11.9px;color:#222;font-weight:normal;">18</span><span class="t" id="t59" style="transform:translate(817.6px,356.65px) translateX(-47.525%) scaleX(0.9505);font-size:8.5px;line-height:11.9px;color:#222;font-weight:normal;">25</span><span class="t" id="t60" style="transform:translate(847.6px,357.34px) scaleX(0.9491);font-size:7.8px;line-height:10.92px;color:#3a6df0;font-weight:normal;text-decoration:underline;">重置</span><span class="t" id="t61" style="transform:translate(450px,377.10px) translateX(-52.670%) scaleX(1.0534);font-size:9px;line-height:12.6px;color:#fff;font-weight:normal;">label1</span>
</body></html>
